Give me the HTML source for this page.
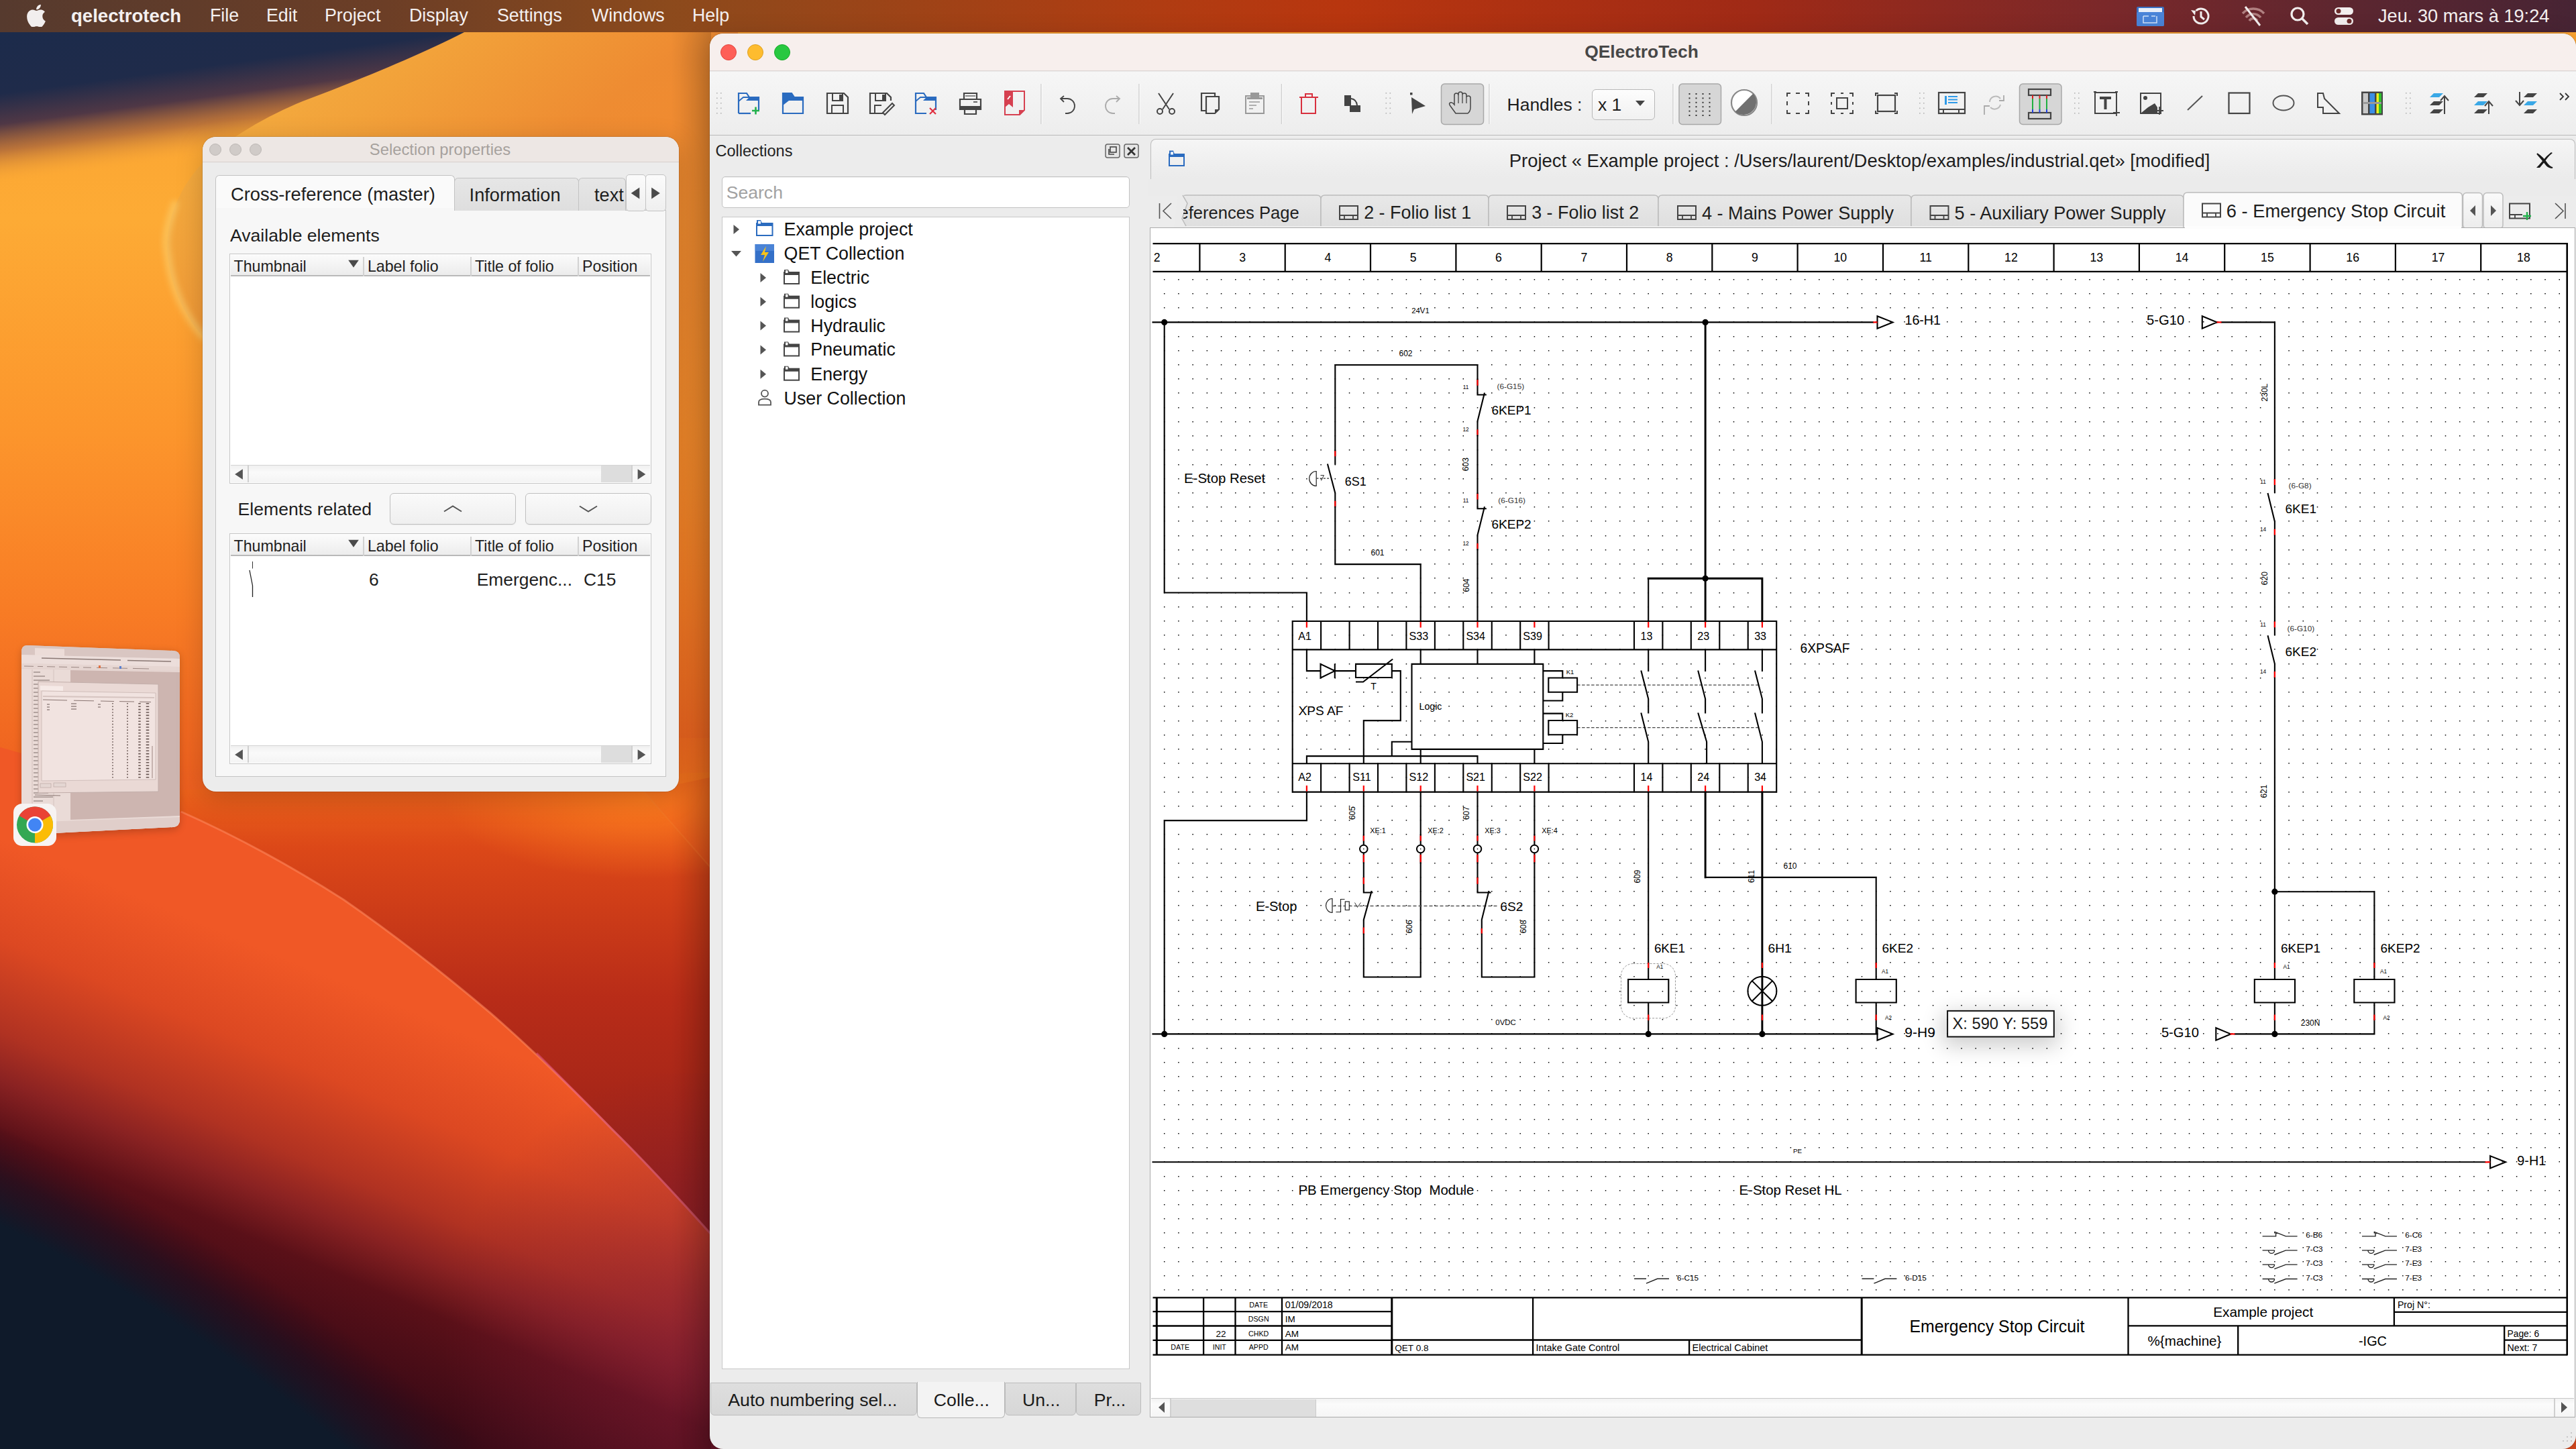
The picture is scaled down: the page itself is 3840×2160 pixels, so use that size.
<!DOCTYPE html>
<html><head><meta charset="utf-8"><title>QElectroTech</title>
<style>
*{box-sizing:border-box}
html,body{margin:0;padding:0}
body{width:3840px;height:2160px;position:relative;overflow:hidden;font-family:"Liberation Sans",sans-serif;background:#6a1a22;color:#1e1e1e}
.a{position:absolute}
.t{position:absolute;white-space:pre;line-height:1}
</style></head><body>

<svg class="a" style="left:0;top:0" width="3840" height="2160" viewBox="0 0 3840 2160">
<defs>
<linearGradient id="wbase" x1="0" y1="0" x2="0" y2="2160" gradientUnits="userSpaceOnUse">
<stop offset="0" stop-color="#f9a030"/>
<stop offset="0.15" stop-color="#fdab35"/>
<stop offset="0.3" stop-color="#fc952c"/>
<stop offset="0.42" stop-color="#f87c25"/>
<stop offset="0.52" stop-color="#f06520"/>
<stop offset="0.6" stop-color="#e4521e"/>
<stop offset="1" stop-color="#d84a20"/>
</linearGradient>
<filter id="bl40" x="-50%" y="-50%" width="200%" height="200%"><feGaussianBlur stdDeviation="45"/></filter>
<filter id="bl6" x="-20%" y="-20%" width="140%" height="140%"><feGaussianBlur stdDeviation="5"/></filter>
<linearGradient id="wave1" x1="300" y1="48" x2="1000" y2="900" gradientUnits="userSpaceOnUse">
<stop offset="0" stop-color="#f5b444"/>
<stop offset="0.22" stop-color="#f2a23a"/>
<stop offset="0.42" stop-color="#ee8c32"/>
<stop offset="0.7" stop-color="#ee7c2c" stop-opacity="0.6"/>
<stop offset="1" stop-color="#f0782a" stop-opacity="0"/>
</linearGradient>
<linearGradient id="red2" x1="0" y1="1150" x2="0" y2="1900" gradientUnits="userSpaceOnUse">
<stop offset="0" stop-color="#f06a1c"/>
<stop offset="0.15" stop-color="#dc4818"/>
<stop offset="0.45" stop-color="#b82c18"/>
<stop offset="1" stop-color="#8a1c18"/>
</linearGradient>
<linearGradient id="lowwave" x1="0" y1="1250" x2="-214" y2="1760" gradientUnits="userSpaceOnUse">
<stop offset="0" stop-color="#f05826"/>
<stop offset="0.25" stop-color="#dc4822"/>
<stop offset="0.48" stop-color="#b03222"/>
<stop offset="0.6" stop-color="#8a2222"/>
<stop offset="0.73" stop-color="#5a1018"/>
<stop offset="1" stop-color="#3a0a16"/>
</linearGradient>
<radialGradient id="purp" cx="1080" cy="2000" r="420" gradientUnits="userSpaceOnUse">
<stop offset="0" stop-color="#7a1a3a" stop-opacity="0.6"/>
<stop offset="1" stop-color="#7a1a3a" stop-opacity="0"/>
</radialGradient>
<radialGradient id="brt" cx="960" cy="1190" r="200" gradientUnits="userSpaceOnUse" gradientTransform="translate(960 1190) scale(1.5 0.6) translate(-960 -1190)">
<stop offset="0" stop-color="#fb7a1e" stop-opacity="0.95"/>
<stop offset="1" stop-color="#fb7a1e" stop-opacity="0"/>
</radialGradient>
<radialGradient id="navyb2" cx="-100" cy="2370" r="660" gradientUnits="userSpaceOnUse" gradientTransform="translate(-100 2370) rotate(30) scale(2.2 1) translate(100 -2370)">
<stop offset="0" stop-color="#0f1a2a"/>
<stop offset="0.8" stop-color="#0f1a2a"/>
<stop offset="0.9" stop-color="#1e1020" stop-opacity="0.7"/>
<stop offset="1" stop-color="#2a0a18" stop-opacity="0"/>
</radialGradient>
<linearGradient id="navyt" x1="0" y1="48" x2="40" y2="348" gradientUnits="userSpaceOnUse">
<stop offset="0" stop-color="#1c2b4b"/>
<stop offset="0.3" stop-color="#1f2b4a"/>
<stop offset="0.45" stop-color="#4a3446" stop-opacity="0.97"/>
<stop offset="0.58" stop-color="#a05e3c" stop-opacity="0.7"/>
<stop offset="0.74" stop-color="#f9a535" stop-opacity="0"/>
</linearGradient>
<linearGradient id="shadowR" x1="1058" y1="0" x2="1000" y2="0" gradientUnits="userSpaceOnUse">
<stop offset="0" stop-color="#000" stop-opacity="0.14"/>
<stop offset="1" stop-color="#000" stop-opacity="0"/>
</linearGradient>
</defs>
<rect x="0" y="0" width="3840" height="2160" fill="url(#wbase)"/>
<!-- right reddish region lower -->
<path d="M200 1180 L1100 1150 L1100 2160 L300 2160 Z" fill="url(#red2)"/>
<path d="M960 1180 L1100 1340 L1100 1150 Z" fill="#e04a1a"/>
<rect x="600" y="1100" width="500" height="250" fill="url(#brt)"/>
<path d="M960 1180 L1100 1340" stroke="#f08030" stroke-width="2" opacity="0.3"/>
<!-- top-left navy -->
<rect x="0" y="40" width="1100" height="320" fill="url(#navyt)"/>
<!-- yellow wave sharp edge -->
<path d="M692 48 C620 85 520 125 451 151 C400 172 340 205 300 245 C268 280 245 330 250 380 C255 430 275 470 305 505 C360 600 420 700 480 1000 L1100 1000 L1100 40 L720 40 Z" fill="url(#wave1)"/>
<path d="M262 300 C248 340 245 360 250 380 C255 430 275 470 305 505" stroke="#fbd070" stroke-width="9" fill="none" opacity="0.7" filter="url(#bl6)"/>
<!-- lower wave sharp edge (orange-red left side) -->
<path d="M-50 1100 C100 1140 200 1175 270 1210 C360 1250 440 1295 512 1341 C590 1395 660 1450 731 1510 C800 1570 860 1630 914 1685 C965 1735 1015 1790 1060 1840 L1100 1890 L1100 2160 L-50 2160 Z" fill="url(#lowwave)"/>
<path d="M270 1210 C360 1250 440 1295 512 1341 C590 1395 660 1450 731 1510 C800 1570 860 1630 914 1685 C965 1735 1015 1790 1060 1840" stroke="#ff8a60" stroke-width="3" fill="none" opacity="0.55"/>
<path d="M800 1570 C860 1630 914 1685 914 1685 C965 1735 1015 1790 1060 1840" stroke="#e85a90" stroke-width="3" fill="none" opacity="0.5"/>
<rect x="600" y="1600" width="500" height="560" fill="url(#purp)"/>
<!-- bottom left navy -->
<rect x="0" y="1500" width="1100" height="660" fill="url(#navyb2)"/>
<rect x="1000" y="48" width="60" height="2112" fill="url(#shadowR)"/>
</svg>

<div class="a" style="left:0;top:0;width:3840px;height:48px;background:linear-gradient(90deg,#563a2e 0%,#6c3e26 15%,#8c4a1c 26%,#b03c12 45%,#b8360f 52%,#a02a16 68%,#7a282a 82%,#5a2630 92%,#472434 100%)"></div>
<svg class="a" style="left:39px;top:6px" width="30" height="34" viewBox="0 0 170 200"><path fill="#f2eeee" d="M140 106c0-24 20-36 21-37-12-17-30-19-36-19-15-2-30 9-38 9-8 0-20-9-33-9-17 0-33 10-42 25-18 31-5 77 13 102 8 12 18 26 31 26 13-1 17-8 33-8 15 0 20 8 33 8 14 0 22-13 30-25 10-14 14-28 14-29-1 0-27-10-26-43zM115 35c7-8 12-20 10-31-10 0-22 7-29 15-6 7-12 19-10 30 11 1 22-6 29-14z"/></svg>
<div class="t" style="left:106px;top:10px;font-size:27.6px;font-weight:700;color:#f4f0f0">qelectrotech</div>
<div class="t" style="left:313px;top:10px;font-size:26.8px;color:#f4f0f0">File</div>
<div class="t" style="left:397px;top:10px;font-size:26.8px;color:#f4f0f0">Edit</div>
<div class="t" style="left:484px;top:10px;font-size:26.8px;color:#f4f0f0">Project</div>
<div class="t" style="left:610px;top:10px;font-size:26.8px;color:#f4f0f0">Display</div>
<div class="t" style="left:741px;top:10px;font-size:26.8px;color:#f4f0f0">Settings</div>
<div class="t" style="left:882px;top:10px;font-size:26.8px;color:#f4f0f0">Windows</div>
<div class="t" style="left:1032px;top:10px;font-size:26.8px;color:#f4f0f0">Help</div>
<!-- status icons -->
<svg class="a" style="left:3185px;top:8px" width="42" height="32" viewBox="0 0 42 32">
<rect x="0" y="2" width="41" height="29" rx="2" fill="#3a6fc0"/>
<rect x="3" y="4" width="35" height="8" fill="#e8eef8"/>
<rect x="0" y="10" width="41" height="21" rx="2" fill="#4a84d8"/>
<path d="M10 16h8M22 16h6M10 16v10h20v-10" stroke="#cfe0f8" stroke-width="1.5" fill="none"/>
</svg>
<svg class="a" style="left:3264px;top:9px" width="32" height="30" viewBox="0 0 32 30"><path d="M6 15a11 11 0 1 0 3.5-8" stroke="#f2eeee" stroke-width="3" fill="none"/><path d="M2 6l7 1 -1 7z" fill="#f2eeee"/><path d="M17 8v8l5 4" stroke="#f2eeee" stroke-width="3" fill="none"/></svg>
<svg class="a" style="left:3340px;top:8px" width="38" height="32" viewBox="0 0 38 32"><path d="M3 12a22 22 0 0 1 32 0M8 18a14 14 0 0 1 22 0M13 23a7 7 0 0 1 12 0" stroke="#b08080" stroke-width="3.5" fill="none"/><path d="M7 2l22 28" stroke="#f2eeee" stroke-width="3"/></svg>
<svg class="a" style="left:3413px;top:9px" width="30" height="30" viewBox="0 0 30 30"><circle cx="12" cy="12" r="9" stroke="#f2eeee" stroke-width="3.2" fill="none"/><path d="M19 19l8 8" stroke="#f2eeee" stroke-width="3.5"/></svg>
<svg class="a" style="left:3479px;top:10px" width="30" height="28" viewBox="0 0 30 28"><rect x="1" y="1" width="28" height="11" rx="5.5" fill="#f2eeee"/><circle cx="7" cy="6.5" r="3.5" fill="#6a2a2a"/><rect x="1" y="16" width="28" height="11" rx="5.5" fill="#f2eeee"/><circle cx="23" cy="21.5" r="3.5" fill="#6a2a2a"/></svg>
<div class="t" style="left:3545px;top:10px;font-size:27.2px;color:#f4f0f0">Jeu. 30 mars à 19:24</div>

<svg class="a" style="left:0;top:940px" width="300" height="340" viewBox="0 940 300 340">
<defs><filter id="thsh" x="-30%" y="-30%" width="160%" height="160%"><feGaussianBlur stdDeviation="6"/></filter><clipPath id="thclip"><path d="M40 962 Q32 962 32 972 L32 1236 Q32 1244 40 1244 L258 1233 Q268 1232 268 1222 L268 980 Q268 970 258 970 Z"/></clipPath></defs>
<path d="M40 966 Q32 966 32 976 L32 1238 Q32 1248 40 1248 L258 1237 Q268 1236 268 1226 L268 984 Q268 972 258 972 Z" fill="#000" opacity="0.2" filter="url(#thsh)"/>
<g clip-path="url(#thclip)">
<rect x="30" y="960" width="240" height="290" fill="#e2d0cc"/>
<path d="M30 960 L270 968 L270 982 L30 976 Z" fill="#d9c6c2"/>
<path d="M52 966 L96 967.5 L96 978 L52 977 Z" fill="#ecdcd8"/>
<path d="M30 976 L270 982 L270 994 L30 989 Z" fill="#ecdedb"/>
<path d="M62 981 L180 984 M190 984.5 L255 986" stroke="#8a7874" stroke-width="1.6"/>
<path d="M30 989 L270 994 L270 1000 L30 996 Z" fill="#e6d6d2"/>
<path d="M36 993 L50 993.3 M56 993.4 L64 993.6 M70 993.7 L82 994 M88 994.1 L100 994.4 M106 994.5 L118 994.8 M124 994.9 L136 995.2 M144 995.3 L160 995.7 M168 995.8 L190 996.3 M198 996.4 L222 997" stroke="#9a8682" stroke-width="1"/>
<rect x="147" y="992" width="3" height="4" fill="#e07040"/><rect x="178" y="993" width="3" height="4" fill="#5a80d0"/>
<path d="M32 997 L270 1001 L270 1240 L32 1248 Z" fill="#eadbd7"/>
<path d="M48 998 L48 1246 M80 998 L80 1245" stroke="#cfbcb8" stroke-width="0.8"/>
<path d="M105 999 L268 1002 L268 1216 L105 1222 Z" fill="#cdb5b0"/>
<path d="M50 1002 L60 1002 M50 1008 L67 1008 M50 1014 L74 1014 M50 1020 L81 1020 M50 1026 L66 1026 M50 1032 L73 1032 M50 1038 L80 1038 M50 1044 L65 1044 M50 1050 L72 1050 M50 1056 L79 1056 M50 1062 L64 1062 M50 1068 L71 1068 M50 1074 L78 1074 M50 1080 L63 1080 M50 1086 L70 1086 M50 1092 L77 1092 M50 1098 L62 1098 M50 1104 L69 1104 M50 1110 L76 1110 M50 1116 L61 1116 M50 1122 L68 1122 M50 1128 L75 1128 M50 1134 L60 1134 M50 1140 L67 1140 M50 1146 L74 1146 M50 1152 L81 1152 M50 1158 L66 1158 M50 1164 L73 1164 M50 1170 L80 1170 M50 1176 L65 1176 M50 1182 L72 1182 M50 1188 L79 1188 M50 1194 L64 1194 M50 1200 L71 1200 " stroke="#7a6a66" stroke-width="1"/>
<path d="M57 1016 L236 1020 L236 1180 L57 1182 Z" fill="#ead9d5" stroke="#c2aeaa" stroke-width="1"/>
<path d="M60 1022 L94 1023 L94 1030 L60 1029Z" fill="#f6eae7"/>
<path d="M62 1030 L232 1033 L232 1162 L62 1164 Z" fill="#f1e3e0" stroke="#c9b6b2" stroke-width="0.8"/>
<path d="M64 1038 L230 1040" stroke="#d6c4c0" stroke-width="2"/>
<path d="M64 1043 L100 1044 M110 1044.2 L140 1044.8 M150 1045 L170 1045.5 M178 1045.6 L200 1046 M208 1046.2 L225 1046.5" stroke="#8a7672" stroke-width="1"/>
<path d="M70 1050 L74 1050 M70 1054 L74 1054 M70 1058 L74 1058 M106 1049 L114 1049 M106 1053 L114 1053 M106 1057 L114 1057 M146 1050 L150 1050 M146 1054 L150 1054" stroke="#6a5854" stroke-width="1.2"/>
<path d="M168 1048 L168 1160" stroke="#6a5854" stroke-width="1.6" stroke-dasharray="1.6 2.8"/>
<path d="M190 1048 L190 1160" stroke="#6a5854" stroke-width="1.8" stroke-dasharray="1.6 2.8"/>
<path d="M208 1048 L208 1160" stroke="#6a5854" stroke-width="3.5" stroke-dasharray="1.6 2.8"/>
<path d="M220 1048 L220 1160" stroke="#6a5854" stroke-width="4.5" stroke-dasharray="1.6 2.8"/>
<path d="M227 1112 L227 1160" stroke="#b8a4a0" stroke-width="1.5"/>
<rect x="60" y="1168" width="16" height="6" fill="#e4d6d2" stroke="#b4a29e" stroke-width="0.6"/><rect x="80" y="1167" width="18" height="6" fill="#e4d6d2" stroke="#b4a29e" stroke-width="0.6"/>
<path d="M52 1185 L90 1186" stroke="#8a7672" stroke-width="1"/>
<path d="M32 1226 L268 1218 L268 1240 L32 1250Z" fill="#e0ceca"/>
</g>
<rect x="20" y="1198" width="64" height="63" rx="13" fill="#f7f3f2"/>
<g transform="translate(52 1229.5)">
<circle r="27" fill="#34a853"/>
<path d="M0 0 L-23.4 -13.5 A27 27 0 0 1 23.4 -13.5 Z" fill="#ea4335"/>
<path d="M0 0 L23.4 -13.5 A27 27 0 0 1 0 27 Z" fill="#fbbc04"/>
<circle r="12.5" fill="#fff"/><circle r="10" fill="#4285f4"/>
</g>
</svg>
<div class="a" style="left:302px;top:204px;width:710px;height:976px;border-radius:20px;box-shadow:0 10px 40px rgba(0,0,0,0.18),0 0 0 1px rgba(0,0,0,0.10);background:#ececec"></div>
<div class="a" style="left:302px;top:204px;width:710px;height:38px;border-radius:20px 20px 0 0;background:#ede7e4;border-bottom:1.5px solid #d6d0cc"></div>
<div class="a" style="left:312px;top:214px;width:18px;height:18px;border-radius:9px;background:#d0cbc8;border:1px solid #bdb8b5"></div>
<div class="a" style="left:342px;top:214px;width:18px;height:18px;border-radius:9px;background:#d0cbc8;border:1px solid #bdb8b5"></div>
<div class="a" style="left:372px;top:214px;width:18px;height:18px;border-radius:9px;background:#d0cbc8;border:1px solid #bdb8b5"></div>
<div class="t" style="left:-344.0px;width:2000px;text-align:center;top:211.4px;font-size:23.8px;color:#a6a19d;font-weight:400;">Selection properties</div>
<div class="a" style="left:320.5px;top:312.5px;width:672.0px;height:845.5px;background:#f7f7f7;border:1.5px solid #c3c3c3"></div>
<div class="a" style="left:677.0px;top:265.0px;width:185.5px;height:49.0px;background:linear-gradient(#e6e6e6,#dedede);border:1.5px solid #c3c3c3;border-bottom:none;border-radius:6px 6px 0 0"></div>
<div class="a" style="left:862.0px;top:265.0px;width:71.0px;height:49.0px;background:linear-gradient(#e6e6e6,#dedede);border:1.5px solid #c3c3c3;border-bottom:none;border-radius:6px 6px 0 0"></div>
<div class="t" style="left:699.6px;top:277.3px;font-size:27.2px;color:#1e1e1e;font-weight:400;">Information</div>
<div class="a" style="left:864px;top:266px;width:68px;height:46px;overflow:hidden"><div class="t" style="left:22.0px;top:11.3px;font-size:27.2px;color:#1e1e1e;font-weight:400;">text</div></div>
<div class="a" style="left:320.5px;top:260.5px;width:357.0px;height:53.5px;background:#fafafa;border:1.5px solid #c3c3c3;border-bottom:none;border-radius:6px 6px 0 0"></div>
<div class="a" style="left:322.0px;top:310.0px;width:354.0px;height:6.0px;background:#f7f7f7"></div>
<div class="t" style="left:344.0px;top:275.7px;font-size:27.3px;color:#1e1e1e;font-weight:400;">Cross-reference (master)</div>
<div class="a" style="left:932.5px;top:260.0px;width:30.5px;height:54.5px;background:linear-gradient(#fbfbfb,#efefef);border:1.5px solid #c3c3c3;border-radius:5px"></div>
<div class="a" style="left:962.0px;top:260.0px;width:30.5px;height:54.5px;background:linear-gradient(#fbfbfb,#efefef);border:1.5px solid #c3c3c3;border-radius:5px"></div>
<svg class="a" style="left:932px;top:260px" width="62" height="56"><polygon points="21.3,19.6 21.3,36.4 8.7,28" fill="#4a4a4a"/><polygon points="39.2,19.6 39.2,36.4 51.8,28" fill="#4a4a4a"/></svg>
<div class="t" style="left:343.0px;top:338.0px;font-size:26.6px;color:#1e1e1e;font-weight:400;">Available elements</div>
<div class="a" style="left:342.0px;top:378.0px;width:628.5px;height:342.5px;background:#fff;border:1.5px solid #c6c6c6"></div>
<div class="a" style="left:343.5px;top:379.5px;width:625.5px;height:32.0px;background:linear-gradient(#fbfbfb,#ececec);border-bottom:2px solid #b9b9b9"></div>
<div class="a" style="left:541.3px;top:383.0px;width:2.0px;height:28.5px;background:#d2d2d2"></div>
<div class="a" style="left:701.2px;top:383.0px;width:2.0px;height:28.5px;background:#d2d2d2"></div>
<div class="a" style="left:861.2px;top:383.0px;width:2.0px;height:28.5px;background:#d2d2d2"></div>
<div class="t" style="left:348.5px;top:386.1px;font-size:23.2px;color:#1e1e1e;font-weight:400;">Thumbnail</div>
<div class="t" style="left:547.9px;top:386.1px;font-size:23.2px;color:#1e1e1e;font-weight:400;">Label folio</div>
<div class="t" style="left:708.0px;top:386.1px;font-size:23.2px;color:#1e1e1e;font-weight:400;">Title of folio</div>
<div class="t" style="left:868.0px;top:386.1px;font-size:23.2px;color:#1e1e1e;font-weight:400;">Position</div>
<svg class="a" style="left:515px;top:386px" width="24" height="16"><polygon points="4.2,1.7999999999999998 19.8,1.7999999999999998 12,12.850000000000001" fill="#4a4a4a"/></svg>
<div class="a" style="left:343.5px;top:692.5px;width:625.5px;height:26.5px;background:linear-gradient(#f0f0f0,#fafafa 40%,#f4f4f4);border-top:1.5px solid #d4d4d4"></div>
<div class="a" style="left:369.0px;top:692.5px;width:2.0px;height:26.5px;background:#d0d0d0"></div>
<div class="a" style="left:896.0px;top:694.0px;width:45.5px;height:25.0px;background:#dddddd"></div>
<div class="a" style="left:941.0px;top:692.5px;width:2.0px;height:26.5px;background:#d0d0d0"></div>
<svg class="a" style="left:342px;top:692.5px" width="628.5" height="28"><polygon points="19.85,6.2 19.85,21.8 8.149999999999999,14" fill="#555"/><polygon points="608.65,6.2 608.65,21.8 620.35,14" fill="#555"/></svg>
<div class="t" style="left:354.6px;top:746.0px;font-size:26.6px;color:#1e1e1e;font-weight:400;">Elements related</div>
<div class="a" style="left:580.7px;top:735.0px;width:188.3px;height:46.5px;background:linear-gradient(#fafafa,#efefef);border:1.5px solid #c0c0c0;border-radius:6px;box-shadow:0 1px 1px rgba(0,0,0,0.06)"></div>
<div class="a" style="left:782.8px;top:735.0px;width:188.5px;height:46.5px;background:linear-gradient(#fafafa,#efefef);border:1.5px solid #c0c0c0;border-radius:6px;box-shadow:0 1px 1px rgba(0,0,0,0.06)"></div>
<svg class="a" style="left:580px;top:735px" width="392" height="47"><path d="M82 27.5 L95 19.5 L108 27.5" stroke="#555" stroke-width="2" fill="none"/><path d="M284 19.5 L297 27.5 L310 19.5" stroke="#555" stroke-width="2" fill="none"/></svg>
<div class="a" style="left:342.0px;top:795.0px;width:628.5px;height:343.5px;background:#fff;border:1.5px solid #c6c6c6"></div>
<div class="a" style="left:343.5px;top:796.5px;width:625.5px;height:32.0px;background:linear-gradient(#fbfbfb,#ececec);border-bottom:2px solid #b9b9b9"></div>
<div class="a" style="left:541.3px;top:800.0px;width:2.0px;height:28.5px;background:#d2d2d2"></div>
<div class="a" style="left:701.2px;top:800.0px;width:2.0px;height:28.5px;background:#d2d2d2"></div>
<div class="a" style="left:861.2px;top:800.0px;width:2.0px;height:28.5px;background:#d2d2d2"></div>
<div class="t" style="left:348.5px;top:803.1px;font-size:23.2px;color:#1e1e1e;font-weight:400;">Thumbnail</div>
<div class="t" style="left:547.9px;top:803.1px;font-size:23.2px;color:#1e1e1e;font-weight:400;">Label folio</div>
<div class="t" style="left:708.0px;top:803.1px;font-size:23.2px;color:#1e1e1e;font-weight:400;">Title of folio</div>
<div class="t" style="left:868.0px;top:803.1px;font-size:23.2px;color:#1e1e1e;font-weight:400;">Position</div>
<svg class="a" style="left:515px;top:803px" width="24" height="16"><polygon points="4.2,1.7999999999999998 19.8,1.7999999999999998 12,12.850000000000001" fill="#4a4a4a"/></svg>
<div class="a" style="left:343.5px;top:1110.5px;width:625.5px;height:26.5px;background:linear-gradient(#f0f0f0,#fafafa 40%,#f4f4f4);border-top:1.5px solid #d4d4d4"></div>
<div class="a" style="left:369.0px;top:1110.5px;width:2.0px;height:26.5px;background:#d0d0d0"></div>
<div class="a" style="left:896.0px;top:1112.0px;width:45.5px;height:25.0px;background:#dddddd"></div>
<div class="a" style="left:941.0px;top:1110.5px;width:2.0px;height:26.5px;background:#d0d0d0"></div>
<svg class="a" style="left:342px;top:1110.5px" width="628.5" height="28"><polygon points="19.85,6.2 19.85,21.8 8.149999999999999,14" fill="#555"/><polygon points="608.65,6.2 608.65,21.8 620.35,14" fill="#555"/></svg>
<div class="t" style="left:550.0px;top:851.1px;font-size:26.4px;color:#1e1e1e;font-weight:400;">6</div>
<div class="t" style="left:710.7px;top:851.1px;font-size:26.4px;color:#1e1e1e;font-weight:400;">Emergenc...</div>
<div class="t" style="left:870.0px;top:851.1px;font-size:26.4px;color:#1e1e1e;font-weight:400;">C15</div>
<svg class="a" style="left:365px;top:835px" width="24" height="58"><path d="M11.5 2 V12.5" stroke="#333" stroke-width="1"/><path d="M7 15 L11.5 38 V55" stroke="#222" stroke-width="1.3" fill="none"/></svg>
<div class="a" style="left:1058px;top:50px;width:2782px;height:2110px;border-radius:20px;background:#ececec;box-shadow:-4px 10px 40px rgba(0,0,0,0.2),0 0 0 1px rgba(0,0,0,0.12)"></div>
<div class="a" style="left:1058px;top:50px;width:2782px;height:56px;border-radius:20px 20px 0 0;background:#f7efed;border-bottom:1.5px solid #dcd3d1"></div>
<div class="a" style="left:1073.9px;top:66.3px;width:24px;height:24px;border-radius:12px;background:#fe5f57;border:1px solid #e2463f"></div>
<div class="a" style="left:1114px;top:66.3px;width:24px;height:24px;border-radius:12px;background:#febc2e;border:1px solid #dea123"></div>
<div class="a" style="left:1153.7px;top:66.3px;width:24px;height:24px;border-radius:12px;background:#28c840;border:1px solid #1aab29"></div>
<div class="t" style="left:1447.0px;width:2000px;text-align:center;top:63.6px;font-size:26.4px;color:#474747;font-weight:700;">QElectroTech</div>
<div class="a" style="left:1058px;top:106.5px;width:2782px;height:95px;background:linear-gradient(#f6f6f6,#ededed);border-bottom:1.5px solid #b9b9b9"></div>
<svg class="a" style="left:1058px;top:106px" width="2782" height="96" viewBox="1058 106 2782 96">
<g fill="none" stroke-linecap="butt">
<rect x="1068" y="138.0" width="1.6" height="1.6" fill="#b4b4b4"/><rect x="1074" y="138.0" width="1.6" height="1.6" fill="#b4b4b4"/><rect x="1068" y="145.5" width="1.6" height="1.6" fill="#b4b4b4"/><rect x="1074" y="145.5" width="1.6" height="1.6" fill="#b4b4b4"/><rect x="1068" y="153.0" width="1.6" height="1.6" fill="#b4b4b4"/><rect x="1074" y="153.0" width="1.6" height="1.6" fill="#b4b4b4"/><rect x="1068" y="160.5" width="1.6" height="1.6" fill="#b4b4b4"/><rect x="1074" y="160.5" width="1.6" height="1.6" fill="#b4b4b4"/><rect x="1068" y="168.0" width="1.6" height="1.6" fill="#b4b4b4"/><rect x="1074" y="168.0" width="1.6" height="1.6" fill="#b4b4b4"/>
<path d="M1101 169 V139 H1113 L1117 145 H1131 V164" stroke="#2a6bbf" stroke-width="2.2"/><path d="M1101 151 L1108 145 H1117" stroke="#2a6bbf" stroke-width="1.8"/><path d="M1101 169 H1119" stroke="#2a6bbf" stroke-width="2.2"/><path d="M1117 145 H1131 V150 H1112Z" fill="#2a6bbf"/><path d="M1121 165 H1132 M1126.5 159.5 V170.5" stroke="#22b14c" stroke-width="2.6"/>
<path d="M1167 169 V139 H1180 L1184 145 H1197 V169 Z" stroke="#2a6bbf" stroke-width="2.2"/><path d="M1167 139 H1180 L1184 145 H1197 V150 H1176 L1167 157 Z" fill="#2a6bbf"/>
<path d="M1233 139 H1258 L1264 145 V169 H1233 Z" stroke="#444" stroke-width="2.2"/><path d="M1241 139 V150 H1256 V139" stroke="#444" stroke-width="2"/><rect x="1251" y="141" width="4" height="8" fill="#444"/><path d="M1240 169 V157 H1257 V169" stroke="#444" stroke-width="2"/>
<path d="M1316 169 H1297 V139 H1322 L1328 145 V150" stroke="#444" stroke-width="2.2"/><path d="M1305 139 V150 H1320 V139" stroke="#444" stroke-width="2"/><rect x="1315" y="141" width="4" height="8" fill="#444"/><path d="M1304 169 V157 H1314" stroke="#444" stroke-width="2"/><path d="M1316 168 L1330 154 L1333 157 L1319 171 Z" stroke="#444" stroke-width="2"/>
<path d="M1381 169 H1365 V139 H1377 L1381 145 H1395 V164" stroke="#2a6bbf" stroke-width="2.2"/><path d="M1365 151 L1372 145 H1381" stroke="#2a6bbf" stroke-width="1.8"/><path d="M1381 145 H1395 V150 H1376Z" fill="#2a6bbf"/><path d="M1386 161 L1395 170 M1395 161 L1386 170" stroke="#e03040" stroke-width="2.2"/>
<path d="M1437 148 V139 H1456 V148" stroke="#444" stroke-width="2.2"/><path d="M1431 163 V148 H1462 V163 Z" stroke="#444" stroke-width="2.2"/><rect x="1431" y="158" width="31" height="6" fill="#444"/><path d="M1438 163 V170 H1455 V163" stroke="#444" stroke-width="2.2"/><path d="M1451 152 H1457" stroke="#444" stroke-width="1.6"/><path d="M1439 143 H1454" stroke="#444" stroke-width="1.2"/>
<path d="M1498 136 H1527 V164 L1520 171 H1498 Z" stroke="#d64050" stroke-width="2"/><path d="M1498 136 H1510 V160 L1504 155 L1498 160 Z" fill="#d64050"/><path d="M1519 172 L1527 164 H1519 Z" fill="#d64050"/><path d="M1502 148 L1506 143" stroke="#fff" stroke-width="2"/>
<rect x="1551.25" y="125" width="1.5" height="60" fill="#cfcfcf"/><rect x="1552.75" y="125" width="1" height="60" fill="#fbfbfb"/>
<path d="M1586 143 L1581 147 L1586 152" stroke="#444" stroke-width="1.8"/><path d="M1581 147 H1591 A11 11 0 0 1 1591 169 H1588" stroke="#444" stroke-width="1.8"/>
<path d="M1664 143 L1669 147 L1664 152" stroke="#aaa" stroke-width="1.8"/><path d="M1669 147 H1659 A11 11 0 0 0 1659 169 H1662" stroke="#aaa" stroke-width="1.8"/>
<rect x="1697.25" y="125" width="1.5" height="60" fill="#cfcfcf"/><rect x="1698.75" y="125" width="1" height="60" fill="#fbfbfb"/>
<path d="M1727 139 L1743 163 M1749 139 L1733 163" stroke="#444" stroke-width="2"/><circle cx="1729" cy="166" r="4" stroke="#444" stroke-width="2"/><circle cx="1747" cy="166" r="4" stroke="#444" stroke-width="2"/>
<path d="M1798 165 H1791 V139 H1811 V144" stroke="#444" stroke-width="2.2"/><path d="M1798 144 H1817 V163 L1811 169 H1798 Z" stroke="#444" stroke-width="2.2"/><path d="M1811 169 L1817 163 H1811Z" fill="#444"/>
<path d="M1857 143 H1884 V169 H1857 Z" stroke="#999" stroke-width="2"/><rect x="1864" y="138" width="13" height="7" fill="#999"/><rect x="1859" y="145" width="23" height="3" fill="#999"/><path d="M1862 152 H1878 M1862 157 H1873 M1862 162 H1868" stroke="#999" stroke-width="1.6"/>
<rect x="1909.75" y="125" width="1.5" height="60" fill="#cfcfcf"/><rect x="1911.25" y="125" width="1" height="60" fill="#fbfbfb"/>
<path d="M1937 145 H1965 M1946 145 V140 H1956 V145 M1940 145 V169 H1961 V145" stroke="#d8303e" stroke-width="2"/>
<rect x="2004" y="142" width="10" height="16" fill="#444"/><rect x="2012" y="157" width="16" height="10" fill="#444"/><path d="M2014 147 Q2022 148 2023 157" stroke="#444" stroke-width="2"/>
<rect x="2065.5" y="138.0" width="1.6" height="1.6" fill="#b4b4b4"/><rect x="2071.5" y="138.0" width="1.6" height="1.6" fill="#b4b4b4"/><rect x="2065.5" y="145.5" width="1.6" height="1.6" fill="#b4b4b4"/><rect x="2071.5" y="145.5" width="1.6" height="1.6" fill="#b4b4b4"/><rect x="2065.5" y="153.0" width="1.6" height="1.6" fill="#b4b4b4"/><rect x="2071.5" y="153.0" width="1.6" height="1.6" fill="#b4b4b4"/><rect x="2065.5" y="160.5" width="1.6" height="1.6" fill="#b4b4b4"/><rect x="2071.5" y="160.5" width="1.6" height="1.6" fill="#b4b4b4"/><rect x="2065.5" y="168.0" width="1.6" height="1.6" fill="#b4b4b4"/><rect x="2071.5" y="168.0" width="1.6" height="1.6" fill="#b4b4b4"/>
<rect x="2102" y="138" width="3.5" height="3.5" fill="#444"/><path d="M2104 145 L2125 158 L2108 163 L2105 170 Z" fill="#444"/>
<rect x="2148.5" y="125" width="63" height="60.5" rx="5" fill="#d6d6d6" stroke="#a8a8a8" stroke-width="1.5"/>
<path d="M2170 169 L2162 158 Q2159 154 2162 153 Q2165 152 2168 156 V142 Q2168 139 2171 139 Q2174 139 2174 142 V140 Q2174 137 2177 137 Q2180 137 2180 140 V141 Q2180 139 2183 139 Q2186 139 2186 142 V145 Q2186 143 2189 143 Q2192 143 2192 146 V160 Q2192 166 2188 169 Z" stroke="#444" stroke-width="1.5"/><path d="M2174 142 V154 M2180 141 V154 M2186 145 V154" stroke="#444" stroke-width="1.3"/>
<rect x="2219.25" y="125" width="1.5" height="60" fill="#cfcfcf"/><rect x="2220.75" y="125" width="1" height="60" fill="#fbfbfb"/>
<rect x="2493.25" y="125" width="1.5" height="60" fill="#cfcfcf"/><rect x="2494.75" y="125" width="1" height="60" fill="#fbfbfb"/>
<rect x="2503" y="125" width="62.5" height="60.5" rx="5" fill="#d6d6d6" stroke="#a8a8a8" stroke-width="1.5"/>
<rect x="2517.5" y="139.0" width="2" height="2" fill="#333"/><rect x="2517.5" y="145.4" width="2" height="2" fill="#333"/><rect x="2517.5" y="151.8" width="2" height="2" fill="#333"/><rect x="2517.5" y="158.2" width="2" height="2" fill="#333"/><rect x="2517.5" y="164.6" width="2" height="2" fill="#333"/><rect x="2517.5" y="171.0" width="2" height="2" fill="#333"/><rect x="2527.5" y="139.0" width="2" height="2" fill="#333"/><rect x="2527.5" y="145.4" width="2" height="2" fill="#333"/><rect x="2527.5" y="151.8" width="2" height="2" fill="#333"/><rect x="2527.5" y="158.2" width="2" height="2" fill="#333"/><rect x="2527.5" y="164.6" width="2" height="2" fill="#333"/><rect x="2527.5" y="171.0" width="2" height="2" fill="#333"/><rect x="2537.5" y="139.0" width="2" height="2" fill="#333"/><rect x="2537.5" y="145.4" width="2" height="2" fill="#333"/><rect x="2537.5" y="151.8" width="2" height="2" fill="#333"/><rect x="2537.5" y="158.2" width="2" height="2" fill="#333"/><rect x="2537.5" y="164.6" width="2" height="2" fill="#333"/><rect x="2537.5" y="171.0" width="2" height="2" fill="#333"/><rect x="2547.5" y="139.0" width="2" height="2" fill="#333"/><rect x="2547.5" y="145.4" width="2" height="2" fill="#333"/><rect x="2547.5" y="151.8" width="2" height="2" fill="#333"/><rect x="2547.5" y="158.2" width="2" height="2" fill="#333"/><rect x="2547.5" y="164.6" width="2" height="2" fill="#333"/><rect x="2547.5" y="171.0" width="2" height="2" fill="#333"/>
<circle cx="2600" cy="153" r="19" fill="#fff" stroke="#888" stroke-width="2.2"/><path d="M2613.4 139.6 A19 19 0 0 1 2586.6 166.4 Z" fill="#707070"/>
<rect x="2640.25" y="125" width="1.5" height="60" fill="#cfcfcf"/><rect x="2641.75" y="125" width="1" height="60" fill="#fbfbfb"/>
<path d="M2664 144 V139 H2669 M2691 139 H2696 V144 M2696 164 V169 H2691 M2669 169 H2664 V164" stroke="#444" stroke-width="2"/><path d="M2677 139 H2683 M2677 169 H2683 M2664 151 V157 M2696 151 V157" stroke="#444" stroke-width="2"/>
<path d="M2730 144 V139 H2735 M2757 139 H2762 V144 M2762 164 V169 H2757 M2735 169 H2730 V164" stroke="#444" stroke-width="2"/><rect x="2738" y="146" width="16" height="16" stroke="#444" stroke-width="2"/><path d="M2744 139 H2748 M2744 169 H2748 M2730 152 V156 M2762 152 V156" stroke="#444" stroke-width="2"/>
<path d="M2796 143 V139 H2800 M2824 139 H2828 V143 M2828 165 V169 H2824 M2800 169 H2796 V165" stroke="#444" stroke-width="2"/><rect x="2799" y="142" width="26" height="24" stroke="#444" stroke-width="2.2"/>
<rect x="2861" y="138.0" width="1.6" height="1.6" fill="#b4b4b4"/><rect x="2867" y="138.0" width="1.6" height="1.6" fill="#b4b4b4"/><rect x="2861" y="145.5" width="1.6" height="1.6" fill="#b4b4b4"/><rect x="2867" y="145.5" width="1.6" height="1.6" fill="#b4b4b4"/><rect x="2861" y="153.0" width="1.6" height="1.6" fill="#b4b4b4"/><rect x="2867" y="153.0" width="1.6" height="1.6" fill="#b4b4b4"/><rect x="2861" y="160.5" width="1.6" height="1.6" fill="#b4b4b4"/><rect x="2867" y="160.5" width="1.6" height="1.6" fill="#b4b4b4"/><rect x="2861" y="168.0" width="1.6" height="1.6" fill="#b4b4b4"/><rect x="2867" y="168.0" width="1.6" height="1.6" fill="#b4b4b4"/>
<rect x="2890" y="138" width="39" height="31" stroke="#444" stroke-width="2.2"/><path d="M2890 163 H2929 M2897 163 V169 M2920 163 V169" stroke="#444" stroke-width="2"/><rect x="2899" y="143" width="3" height="13" fill="#2e9ae8"/><path d="M2904 144 H2918 M2904 148.5 H2918 M2904 153 H2918" stroke="#2e9ae8" stroke-width="2"/>
<path d="M2958 171 V158 H2966 M2987 142 V150 H2980" stroke="#aaa" stroke-width="1.8"/><path d="M2966 152 A9 9 0 0 1 2982 147 M2982 156 A9 9 0 0 1 2967 160" stroke="#bbb" stroke-width="2"/>
<rect x="3010.5" y="125" width="62.5" height="60.5" rx="5" fill="#d6d6d6" stroke="#a8a8a8" stroke-width="1.5"/>
<rect x="3024" y="133" width="33" height="9" stroke="#444" stroke-width="2.2"/><rect x="3024" y="168" width="33" height="9" stroke="#444" stroke-width="2.2"/>
<path d="M3030 142 V147" stroke="#e02020" stroke-width="2"/><path d="M3030 147 V163" stroke="#20b040" stroke-width="2"/><path d="M3030 163 V168" stroke="#2040e0" stroke-width="2"/>
<path d="M3040.5 142 V147" stroke="#e02020" stroke-width="2"/><path d="M3040.5 147 V163" stroke="#20b040" stroke-width="2"/><path d="M3040.5 163 V168" stroke="#2040e0" stroke-width="2"/>
<path d="M3051 142 V147" stroke="#e02020" stroke-width="2"/><path d="M3051 147 V163" stroke="#20b040" stroke-width="2"/><path d="M3051 163 V168" stroke="#2040e0" stroke-width="2"/>
<rect x="3092" y="138.0" width="1.6" height="1.6" fill="#b4b4b4"/><rect x="3098" y="138.0" width="1.6" height="1.6" fill="#b4b4b4"/><rect x="3092" y="145.5" width="1.6" height="1.6" fill="#b4b4b4"/><rect x="3098" y="145.5" width="1.6" height="1.6" fill="#b4b4b4"/><rect x="3092" y="153.0" width="1.6" height="1.6" fill="#b4b4b4"/><rect x="3098" y="153.0" width="1.6" height="1.6" fill="#b4b4b4"/><rect x="3092" y="160.5" width="1.6" height="1.6" fill="#b4b4b4"/><rect x="3098" y="160.5" width="1.6" height="1.6" fill="#b4b4b4"/><rect x="3092" y="168.0" width="1.6" height="1.6" fill="#b4b4b4"/><rect x="3098" y="168.0" width="1.6" height="1.6" fill="#b4b4b4"/>
<rect x="3123" y="138" width="32" height="31" stroke="#444" stroke-width="2"/><path d="M3130 146 H3147 M3138.5 146 V163" stroke="#444" stroke-width="4"/><path d="M3150 168 H3160 M3155 163 V173" stroke="#444" stroke-width="1.8"/>
<path d="M3121 137 H3125 M3153 137 H3157" stroke="#444" stroke-width="2"/>
<rect x="3191" y="139" width="30" height="30" stroke="#444" stroke-width="2"/><circle cx="3198" cy="146" r="3" fill="#444"/><path d="M3191 169 L3202 160 Q3207 157 3212 154 L3216 160 V169 Z" fill="#444"/><path d="M3213 165 H3225 M3219 159 V171" stroke="#444" stroke-width="1.8"/>
<path d="M3261 164 L3283 143" stroke="#555" stroke-width="2"/>
<rect x="3322.5" y="138.5" width="31" height="30.5" stroke="#444" stroke-width="2.2"/>
<ellipse cx="3404" cy="153.5" rx="15.5" ry="11" stroke="#555" stroke-width="2"/>
<path d="M3455 139 H3463 L3465 147 L3487 169 H3463 V160 H3455 Z" stroke="#444" stroke-width="2"/>
<rect x="3520" y="136.5" width="32" height="35" fill="#444"/><rect x="3522.5" y="139" width="7.5" height="30" fill="#c8c8c8"/><rect x="3532.5" y="139" width="7.5" height="30" fill="#3a8ee6"/><rect x="3542.5" y="139" width="7.5" height="30" fill="#f0f020"/><rect x="3546" y="139" width="4" height="30" fill="#30c030"/><rect x="3522" y="152" width="28" height="3" fill="#999"/>
<rect x="3586" y="138.0" width="1.6" height="1.6" fill="#b4b4b4"/><rect x="3592" y="138.0" width="1.6" height="1.6" fill="#b4b4b4"/><rect x="3586" y="145.5" width="1.6" height="1.6" fill="#b4b4b4"/><rect x="3592" y="145.5" width="1.6" height="1.6" fill="#b4b4b4"/><rect x="3586" y="153.0" width="1.6" height="1.6" fill="#b4b4b4"/><rect x="3592" y="153.0" width="1.6" height="1.6" fill="#b4b4b4"/><rect x="3586" y="160.5" width="1.6" height="1.6" fill="#b4b4b4"/><rect x="3592" y="160.5" width="1.6" height="1.6" fill="#b4b4b4"/><rect x="3586" y="168.0" width="1.6" height="1.6" fill="#b4b4b4"/><rect x="3592" y="168.0" width="1.6" height="1.6" fill="#b4b4b4"/>
<path d="M3622 145 L3628 139 H3642 L3636 145 Z" fill="#3aa8e6"/><path d="M3622 157 L3628 151 H3642 L3636 157 Z" fill="#444"/><path d="M3622 169 L3628 163 H3642 L3636 169 Z" fill="#444"/><path d="M3644 170 V144 M3638 150 L3644 143 L3650 150" stroke="#444" stroke-width="2"/>
<path d="M3688 145 L3694 139 H3708 L3702 145 Z" fill="#444"/><path d="M3688 157 L3694 151 H3708 L3702 157 Z" fill="#3aa8e6"/><path d="M3688 169 L3694 163 H3708 L3702 169 Z" fill="#444"/><path d="M3710 170 V152 M3704 158 L3710 151 L3716 158" stroke="#444" stroke-width="2"/>
<path d="M3762 145 L3768 139 H3782 L3776 145 Z" fill="#444"/><path d="M3762 157 L3768 151 H3782 L3776 157 Z" fill="#3aa8e6"/><path d="M3762 169 L3768 163 H3782 L3776 169 Z" fill="#444"/><path d="M3756 137 V156 M3750 150 L3756 157 L3762 150" stroke="#444" stroke-width="2"/>
<path d="M3816 139 L3821 144 L3816 149 M3824 139 L3829 144 L3824 149" stroke="#333" stroke-width="1.8"/>
</g></svg>
<div class="t" style="left:2246.5px;top:143.1px;font-size:26.5px;color:#1e1e1e;font-weight:400;">Handles :</div>
<div class="a" style="left:2372.5px;top:132.5px;width:94.5px;height:46.5px;background:linear-gradient(#fdfdfd,#f1f1f1);border:1.5px solid #b8b8b8;border-radius:6px"></div>
<div class="t" style="left:2382.0px;top:143.1px;font-size:26.5px;color:#1e1e1e;font-weight:400;">x 1</div>
<svg class="a" style="left:2436px;top:148px" width="20" height="14"><polygon points="2,2 16,2 9,10" fill="#444"/></svg>
<div class="t" style="left:1066.5px;top:213.7px;font-size:23.5px;color:#222;font-weight:400;">Collections</div>
<svg class="a" style="left:1646px;top:213px" width="54" height="24" viewBox="1646 213 54 24"><rect x="1648" y="215" width="21" height="20" rx="3" fill="#e6e6e6" stroke="#666" stroke-width="1.5"/><rect x="1655" y="219" width="9" height="8" fill="none" stroke="#444" stroke-width="1.6"/><path d="M1653 222 V230 H1661" stroke="#444" stroke-width="1.6" fill="none"/><rect x="1676" y="215" width="21" height="20" rx="3" fill="#e6e6e6" stroke="#666" stroke-width="1.5"/><path d="M1681 220 L1692 231 M1692 220 L1681 231" stroke="#333" stroke-width="2.8"/></svg>
<div class="a" style="left:1076.0px;top:263.0px;width:607.5px;height:46.5px;background:#fff;border:1.5px solid #c2c2c2;border-radius:5px;box-shadow:inset 0 1px 1px rgba(0,0,0,0.05)"></div>
<div class="t" style="left:1082.7px;top:273.8px;font-size:26.6px;color:#a2a2a2;font-weight:400;">Search</div>
<div class="a" style="left:1076.0px;top:323.0px;width:607.5px;height:1717.5px;background:#fff;border:1.5px solid #c8c8c8"></div>
<svg class="a" style="left:1076px;top:323px" width="608" height="300" viewBox="1076 323 608 300">
<polygon points="1093.5,335 1093.5,349 1102.0,342" fill="#555"/>
<rect x="1128" y="333" width="23.5" height="18" fill="none" stroke="#2a6bbf" stroke-width="2"/><path d="M1128 333 V328 H1134 L1136 333 H1151.5 V337 H1128 Z" fill="#2a6bbf"/><rect x="1130" y="329.5" width="4" height="4" fill="#fff"/>
<polygon points="1090.0,374 1105.0,374 1097.5,382.5" fill="#555"/>
<rect x="1125.5" y="364" width="28.5" height="28" fill="#3470c8"/><rect x="1125.5" y="364" width="28.5" height="10" fill="#5a90e0" opacity="0.6"/><path d="M1142 367 L1134 380 H1140 L1137 390 L1146 376 H1140 Z" fill="#f7c21a"/>
<polygon points="1133.5,407 1133.5,421 1142.0,414" fill="#555"/>
<rect x="1169" y="406" width="22" height="17" fill="none" stroke="#444" stroke-width="2"/><path d="M1169 406 V402 H1175 L1177 406 H1191 V410 H1169 Z" fill="#444"/><rect x="1171" y="403" width="3.5" height="4" fill="#fff"/>
<polygon points="1133.5,442.7 1133.5,456.7 1142.0,449.7" fill="#555"/>
<rect x="1169" y="441.7" width="22" height="17" fill="none" stroke="#444" stroke-width="2"/><path d="M1169 441.7 V437.7 H1175 L1177 441.7 H1191 V445.7 H1169 Z" fill="#444"/><rect x="1171" y="438.7" width="3.5" height="4" fill="#fff"/>
<polygon points="1133.5,478.6 1133.5,492.6 1142.0,485.6" fill="#555"/>
<rect x="1169" y="477.6" width="22" height="17" fill="none" stroke="#444" stroke-width="2"/><path d="M1169 477.6 V473.6 H1175 L1177 477.6 H1191 V481.6 H1169 Z" fill="#444"/><rect x="1171" y="474.6" width="3.5" height="4" fill="#fff"/>
<polygon points="1133.5,514.5 1133.5,528.5 1142.0,521.5" fill="#555"/>
<rect x="1169" y="513.5" width="22" height="17" fill="none" stroke="#444" stroke-width="2"/><path d="M1169 513.5 V509.5 H1175 L1177 513.5 H1191 V517.5 H1169 Z" fill="#444"/><rect x="1171" y="510.5" width="3.5" height="4" fill="#fff"/>
<polygon points="1133.5,550.7 1133.5,564.7 1142.0,557.7" fill="#555"/>
<rect x="1169" y="549.7" width="22" height="17" fill="none" stroke="#444" stroke-width="2"/><path d="M1169 549.7 V545.7 H1175 L1177 549.7 H1191 V553.7 H1169 Z" fill="#444"/><rect x="1171" y="546.7" width="3.5" height="4" fill="#fff"/>
<circle cx="1140" cy="586.6" r="5" fill="none" stroke="#555" stroke-width="1.8"/><path d="M1131 603.6 V599.6 Q1131 594.6 1140 594.6 Q1149 594.6 1149 599.6 V603.6 Z" fill="none" stroke="#555" stroke-width="1.8"/>
</svg>
<div class="t" style="left:1168.6px;top:328.9px;font-size:26.8px;color:#111;font-weight:400;">Example project</div>
<div class="t" style="left:1168.6px;top:364.9px;font-size:26.8px;color:#111;font-weight:400;">QET Collection</div>
<div class="t" style="left:1208.3px;top:400.9px;font-size:26.8px;color:#111;font-weight:400;">Electric</div>
<div class="t" style="left:1208.3px;top:436.6px;font-size:26.8px;color:#111;font-weight:400;">logics</div>
<div class="t" style="left:1208.3px;top:472.5px;font-size:26.8px;color:#111;font-weight:400;">Hydraulic</div>
<div class="t" style="left:1208.3px;top:508.4px;font-size:26.8px;color:#111;font-weight:400;">Pneumatic</div>
<div class="t" style="left:1208.3px;top:544.6px;font-size:26.8px;color:#111;font-weight:400;">Energy</div>
<div class="t" style="left:1168.6px;top:580.5px;font-size:26.8px;color:#111;font-weight:400;">User Collection</div>
<div class="a" style="left:1059.0px;top:2060.5px;width:308.0px;height:49.0px;background:linear-gradient(#dedede,#d7d7d7);border:1.5px solid #bcbcbc;border-radius:0 0 6px 6px"></div>
<div class="t" style="left:1085.3px;top:2074.0px;font-size:26.7px;color:#1a1a1a;font-weight:400;">Auto numbering sel...</div>
<div class="a" style="left:1367.0px;top:2060.0px;width:131.0px;height:53.5px;background:#f3f3f3;border:1.5px solid #b8b8b8;border-top:none;border-radius:0 0 6px 6px"></div>
<div class="t" style="left:1391.8px;top:2074.0px;font-size:26.7px;color:#1a1a1a;font-weight:400;">Colle...</div>
<div class="a" style="left:1498.0px;top:2060.5px;width:106.0px;height:49.0px;background:linear-gradient(#dedede,#d7d7d7);border:1.5px solid #bcbcbc;border-radius:0 0 6px 6px"></div>
<div class="t" style="left:1524.0px;top:2074.0px;font-size:26.7px;color:#1a1a1a;font-weight:400;">Un...</div>
<div class="a" style="left:1604.0px;top:2060.5px;width:97.0px;height:49.0px;background:linear-gradient(#dedede,#d7d7d7);border:1.5px solid #bcbcbc;border-radius:0 0 6px 6px"></div>
<div class="t" style="left:1630.7px;top:2074.0px;font-size:26.7px;color:#1a1a1a;font-weight:400;">Pr...</div>
<div class="a" style="left:1714.5px;top:207.0px;width:2124.0px;height:83.0px;background:linear-gradient(#f5f5f5,#ebebeb 70%,#ebebeb);border:1.5px solid #bdbdbd;border-bottom:none;border-radius:8px 8px 0 0"></div>
<div class="a" style="left:1712.0px;top:267.0px;width:2128.0px;height:25.0px;background:#ebebeb"></div>
<svg class="a" style="left:1740px;top:222px" width="30" height="30" viewBox="1740 222 30 30"><rect x="1743" y="230" width="22" height="17" fill="none" stroke="#2a6bbf" stroke-width="2"/><path d="M1743 230 V224.5 H1749 L1751 230 H1765 V234 H1743 Z" fill="#2a6bbf"/><rect x="1745" y="226.5" width="4" height="4" fill="#fff"/></svg>
<div class="t" style="left:2249.7px;top:225.6px;font-size:27.45px;color:#1e1e1e;font-weight:400;">Project « Example project : /Users/laurent/Desktop/examples/industrial.qet» [modified]</div>
<svg class="a" style="left:3776px;top:222px" width="34" height="32" viewBox="3776 222 34 32"><path d="M3782 229 Q3790 234 3797 244 Q3801 249 3805 250 Q3800 250 3796 246 Q3790 238 3782 229Z" fill="#1a1a1a" stroke="#1a1a1a" stroke-width="2"/><path d="M3803 227 Q3795 233 3790 240 Q3785 246 3781 250 L3786 250 Q3792 243 3797 236 Q3801 231 3805 228Z" fill="#1a1a1a"/></svg>
<svg class="a" style="left:1714px;top:284px" width="2126" height="60" viewBox="1714 284 2126 60">
<path d="M1728.5 303 V326 M1746 303 L1734 314.5 L1746 326" stroke="#555" stroke-width="1.6" fill="none"/>
<path d="M1762 337 V297 Q1762 291 1768 291 H1963 Q1969 291 1969 297 V337" fill="url(#tabg)" stroke="#bcbcbc" stroke-width="1.5"/>
<path d="M1969 337 V297 Q1969 291 1975 291 H2213 Q2219 291 2219 297 V337" fill="url(#tabg)" stroke="#bcbcbc" stroke-width="1.5"/>
<path d="M2219 337 V297 Q2219 291 2225 291 H2466 Q2472 291 2472 297 V337" fill="url(#tabg)" stroke="#bcbcbc" stroke-width="1.5"/>
<path d="M2472 337 V297 Q2472 291 2478 291 H2843 Q2849 291 2849 297 V337" fill="url(#tabg)" stroke="#bcbcbc" stroke-width="1.5"/>
<path d="M2849 337 V297 Q2849 291 2855 291 H3249 Q3255 291 3255 297 V337" fill="url(#tabg)" stroke="#bcbcbc" stroke-width="1.5"/>
<path d="M1756 290 L1764 290 L1770 303 L1762 326 L1768 340 L1750 340 Z" fill="#ebebeb"/>
<path d="M1763 291 L1770 303 L1762 326 L1768 337" stroke="#bcbcbc" stroke-width="1.5" fill="none"/>
<rect x="1997" y="307" width="27" height="20" fill="none" stroke="#444" stroke-width="2"/><path d="M1997 321 H2024 M2004 321 V327 M2017 321 V327" stroke="#444" stroke-width="1.8"/>
<rect x="2247" y="307" width="27" height="20" fill="none" stroke="#444" stroke-width="2"/><path d="M2247 321 H2274 M2254 321 V327 M2267 321 V327" stroke="#444" stroke-width="1.8"/>
<rect x="2501" y="307" width="27" height="20" fill="none" stroke="#444" stroke-width="2"/><path d="M2501 321 H2528 M2508 321 V327 M2521 321 V327" stroke="#444" stroke-width="1.8"/>
<rect x="2877.5" y="307" width="27" height="20" fill="none" stroke="#444" stroke-width="2"/><path d="M2877.5 321 H2904.5 M2884.5 321 V327 M2897.5 321 V327" stroke="#444" stroke-width="1.8"/>
<path d="M3255 341 V293 Q3255 287 3261 287 H3664.5 Q3670.5 287 3670.5 293 V341" fill="#fbfbfb" stroke="#bcbcbc" stroke-width="1.5"/>
<rect x="3283" y="303.5" width="27" height="20" fill="none" stroke="#444" stroke-width="2"/><path d="M3283 317.5 H3310 M3290 317.5 V323.5 M3303 317.5 V323.5" stroke="#444" stroke-width="1.8"/>
<rect x="3671.5" y="287.5" width="29" height="53" rx="5" fill="url(#btng)" stroke="#bcbcbc" stroke-width="1.5"/>
<rect x="3702" y="287.5" width="29" height="53" rx="5" fill="url(#btng)" stroke="#bcbcbc" stroke-width="1.5"/>
<polygon points="3690,306 3690,322 3682,314" fill="#555"/><polygon points="3713,306 3713,322 3721,314" fill="#555"/>
<rect x="3741" y="303.5" width="30" height="22" fill="none" stroke="#444" stroke-width="2"/><path d="M3741 320 H3760 M3749 320 V326" stroke="#444" stroke-width="1.8"/><path d="M3761 322 H3773 M3767 316 V328" stroke="#22b14c" stroke-width="2.4"/>
<path d="M3809 303 L3821 314.5 L3809 326 M3824 303 V326" stroke="#555" stroke-width="1.6" fill="none"/>
<defs><linearGradient id="tabg" x1="0" y1="0" x2="0" y2="1"><stop offset="0" stop-color="#e8e8e8"/><stop offset="1" stop-color="#dfdfdf"/></linearGradient><linearGradient id="btng" x1="0" y1="0" x2="0" y2="1"><stop offset="0" stop-color="#fafafa"/><stop offset="1" stop-color="#ececec"/></linearGradient></defs>
</svg>
<div class="a" style="left:1764px;top:291px;width:204px;height:46px;overflow:hidden"><div class="t" style="left:-25.0px;top:13.9px;font-size:25.6px;color:#1e1e1e;font-weight:400;">References Page</div></div>
<div class="t" style="left:2033.2px;top:304.3px;font-size:26.9px;color:#1e1e1e;font-weight:400;">2 - Folio list 1</div>
<div class="t" style="left:2283.2px;top:304.3px;font-size:26.9px;color:#1e1e1e;font-weight:400;">3 - Folio list 2</div>
<div class="t" style="left:2537.0px;top:304.2px;font-size:27.08px;color:#1e1e1e;font-weight:400;">4 - Mains Power Supply</div>
<div class="t" style="left:2913.6px;top:304.2px;font-size:27.12px;color:#1e1e1e;font-weight:400;">5 - Auxiliary Power Supply</div>
<div class="t" style="left:3318.7px;top:300.6px;font-size:27.33px;color:#1e1e1e;font-weight:400;">6 - Emergency Stop Circuit</div>
<div class="a" style="left:1714.0px;top:339.0px;width:2124.5px;height:1774.0px;background:#fff;border:1.5px solid #ababab"></div>
<div class="a" style="left:3256.5px;top:337.0px;width:412.5px;height:5.0px;background:#fdfdfd"></div>
<div class="a" style="left:1716.0px;top:2084.0px;width:2121.0px;height:28.0px;background:linear-gradient(#f2f2f2,#fbfbfb 30%,#f5f5f5);border-top:1.5px solid #c8c8c8"></div>
<div class="a" style="left:1744.0px;top:2085.0px;width:2.0px;height:27.0px;background:#cfcfcf"></div>
<div class="a" style="left:1746.0px;top:2085.5px;width:216.0px;height:26.5px;background:#dedede;border-right:1.5px solid #cccccc"></div>
<div class="a" style="left:3807.0px;top:2085.0px;width:2.0px;height:27.0px;background:#cfcfcf"></div>
<svg class="a" style="left:1716px;top:2084px" width="2122" height="28" viewBox="1716 2084 2122 28"><polygon points="1736,2090 1736,2106 1727,2098" fill="#555"/><polygon points="3818,2090 3818,2106 3827,2098" fill="#555"/></svg>
<svg class="a" style="left:3800px;top:2120px" width="40" height="40" viewBox="3800 2120 40 40"><rect x="3820" y="2147" width="2" height="2" fill="#c8c8c8"/><rect x="3826" y="2141" width="2" height="2" fill="#c8c8c8"/><rect x="3826" y="2147" width="2" height="2" fill="#c8c8c8"/><rect x="3832" y="2135" width="2" height="2" fill="#c8c8c8"/><rect x="3832" y="2141" width="2" height="2" fill="#c8c8c8"/><rect x="3832" y="2147" width="2" height="2" fill="#c8c8c8"/></svg>
<svg class="a" style="left:1716.5px;top:340.5px" width="2120.5" height="1743.5" viewBox="1716.5 340.5 2120.5 1743.5" font-family="Liberation Sans, sans-serif">
<defs><pattern id="dots" x="1734.45" y="415.45" width="21.22" height="21.22" patternUnits="userSpaceOnUse"><rect x="0" y="0" width="1.5" height="1.5" fill="#222"/></pattern><filter id="tipsh" x="-50%" y="-120%" width="200%" height="340%"><feGaussianBlur stdDeviation="16"/></filter></defs>
<rect x="1716.5" y="340.5" width="2120.5" height="1743.5" fill="#fff"/>
<path d="M1734.45 416.25H3826 M1734.45 437.25H3826 M1734.45 458.25H3826 M1734.45 479.25H3826 M1734.45 501.25H3826 M1734.45 522.25H3826 M1734.45 543.25H3826 M1734.45 564.25H3826 M1734.45 585.25H3826 M1734.45 607.25H3826 M1734.45 628.25H3826 M1734.45 649.25H3826 M1734.45 670.25H3826 M1734.45 692.25H3826 M1734.45 713.25H3826 M1734.45 734.25H3826 M1734.45 755.25H3826 M1734.45 776.25H3826 M1734.45 798.25H3826 M1734.45 819.25H3826 M1734.45 840.25H3826 M1734.45 861.25H3826 M1734.45 883.25H3826 M1734.45 904.25H3826 M1734.45 925.25H3826 M1734.45 946.25H3826 M1734.45 967.25H3826 M1734.45 989.25H3826 M1734.45 1010.25H3826 M1734.45 1031.25H3826 M1734.45 1052.25H3826 M1734.45 1074.25H3826 M1734.45 1095.25H3826 M1734.45 1116.25H3826 M1734.45 1137.25H3826 M1734.45 1158.25H3826 M1734.45 1180.25H3826 M1734.45 1201.25H3826 M1734.45 1222.25H3826 M1734.45 1243.25H3826 M1734.45 1265.25H3826 M1734.45 1286.25H3826 M1734.45 1307.25H3826 M1734.45 1328.25H3826 M1734.45 1349.25H3826 M1734.45 1371.25H3826 M1734.45 1392.25H3826 M1734.45 1413.25H3826 M1734.45 1434.25H3826 M1734.45 1455.25H3826 M1734.45 1477.25H3826 M1734.45 1498.25H3826 M1734.45 1519.25H3826 M1734.45 1540.25H3826 M1734.45 1562.25H3826 M1734.45 1583.25H3826 M1734.45 1604.25H3826 M1734.45 1625.25H3826 M1734.45 1646.25H3826 M1734.45 1668.25H3826 M1734.45 1689.25H3826 M1734.45 1710.25H3826 M1734.45 1731.25H3826 M1734.45 1753.25H3826 M1734.45 1774.25H3826 M1734.45 1795.25H3826 M1734.45 1816.25H3826 M1734.45 1837.25H3826 M1734.45 1859.25H3826 M1734.45 1880.25H3826 M1734.45 1901.25H3826 M1734.45 1922.25H3826" stroke="#000" stroke-width="1.5" stroke-dasharray="1.5 19.72" fill="none"/>
<rect x="1718" y="2021" width="2107" height="62" fill="#fff"/>
<g stroke="#000" fill="none">
<path d="M1718 362.6 H3826.2 M1718 404.4 H3826.2" stroke-width="2.2"/>
<path d="M3826.2 361.5 V2020" stroke-width="2.6"/>
<path d="M1787.9 362.6 V404.4 M1915.2 362.6 V404.4 M2042.5 362.6 V404.4 M2169.9 362.6 V404.4 M2297.2 362.6 V404.4 M2424.5 362.6 V404.4 M2551.8 362.6 V404.4 M2679.1 362.6 V404.4 M2806.5 362.6 V404.4 M2933.8 362.6 V404.4 M3061.1 362.6 V404.4 M3188.4 362.6 V404.4 M3315.7 362.6 V404.4 M3443.1 362.6 V404.4 M3570.4 362.6 V404.4 M3697.7 362.6 V404.4 " stroke-width="2.2"/>
</g>
<text x="1724.2" y="389.8" font-size="17.7" fill="#000" text-anchor="middle" style="white-space:pre" >2</text>
<text x="1851.6" y="389.8" font-size="17.7" fill="#000" text-anchor="middle" style="white-space:pre" >3</text>
<text x="1978.9" y="389.8" font-size="17.7" fill="#000" text-anchor="middle" style="white-space:pre" >4</text>
<text x="2106.2" y="389.8" font-size="17.7" fill="#000" text-anchor="middle" style="white-space:pre" >5</text>
<text x="2233.5" y="389.8" font-size="17.7" fill="#000" text-anchor="middle" style="white-space:pre" >6</text>
<text x="2360.8" y="389.8" font-size="17.7" fill="#000" text-anchor="middle" style="white-space:pre" >7</text>
<text x="2488.2" y="389.8" font-size="17.7" fill="#000" text-anchor="middle" style="white-space:pre" >8</text>
<text x="2615.5" y="389.8" font-size="17.7" fill="#000" text-anchor="middle" style="white-space:pre" >9</text>
<text x="2742.8" y="389.8" font-size="17.7" fill="#000" text-anchor="middle" style="white-space:pre" >10</text>
<text x="2870.1" y="389.8" font-size="17.7" fill="#000" text-anchor="middle" style="white-space:pre" >11</text>
<text x="2997.4" y="389.8" font-size="17.7" fill="#000" text-anchor="middle" style="white-space:pre" >12</text>
<text x="3124.8" y="389.8" font-size="17.7" fill="#000" text-anchor="middle" style="white-space:pre" >13</text>
<text x="3252.1" y="389.8" font-size="17.7" fill="#000" text-anchor="middle" style="white-space:pre" >14</text>
<text x="3379.4" y="389.8" font-size="17.7" fill="#000" text-anchor="middle" style="white-space:pre" >15</text>
<text x="3506.7" y="389.8" font-size="17.7" fill="#000" text-anchor="middle" style="white-space:pre" >16</text>
<text x="3634.0" y="389.8" font-size="17.7" fill="#000" text-anchor="middle" style="white-space:pre" >17</text>
<text x="3761.4" y="389.8" font-size="17.7" fill="#000" text-anchor="middle" style="white-space:pre" >18</text>
<path d="M1718.0 479.9 L2791.7 479.9 M1735.2 479.9 L1735.2 883.0 L1947.4 883.0 L1947.4 925.5 M1718.0 1540.9 L2798.0 1540.9 M1735.2 1540.9 L1735.2 1222.6 L1947.4 1222.6 L1947.4 1180.1 M1989.8 670.8 L1989.8 543.5 L2202.0 543.5 L2202.0 564.7 M2202.0 649.6 L2202.0 734.5 M2202.0 819.4 L2202.0 925.5 M1989.8 755.7 L1989.8 840.6 L2117.2 840.6 L2117.2 925.5 M2456.7 925.5 L2456.7 861.8 L2626.4 861.8 L2626.4 925.5 M2541.6 479.9 L2541.6 925.5 M2032.3 1180.1 L2032.3 1243.8 M2032.3 1286.2 L2032.3 1307.4 M2117.2 1180.1 L2117.2 1243.8 M2117.2 1286.2 L2117.2 1456.0 L2032.3 1456.0 L2032.3 1392.3 M2202.0 1180.1 L2202.0 1243.8 M2202.0 1286.2 L2202.0 1307.4 M2286.9 1180.1 L2286.9 1243.8 M2286.9 1286.2 L2286.9 1456.0 L2208.3 1456.0 L2208.3 1392.3 M2456.7 1180.1 L2456.7 1434.8 M2456.7 1519.6 L2456.7 1540.9 M2541.6 1180.1 L2541.6 1307.4 L2796.2 1307.4 L2796.2 1434.8 M2796.2 1519.6 L2796.2 1540.9 M2626.4 1180.1 L2626.4 1434.8 M2626.4 1519.6 L2626.4 1540.9 M3311.0 479.9 L3390.4 479.9 L3390.4 713.3 M3390.4 798.2 L3390.4 925.5 M3390.4 1010.4 L3390.4 1434.8 M3390.4 1328.7 L3538.9 1328.7 L3538.9 1434.8 M3331.0 1540.9 L3538.9 1540.9 L3538.9 1519.6 M3390.4 1519.6 L3390.4 1540.9 M1718.0 1731.8 L3704.0 1731.8" stroke="#000" stroke-width="2.1" fill="none" stroke-linecap="square"/>
<path d="M2541.6 479.9 V925.5 M2456.7 861.8 H2626.4 V925.5 M2541.6 1180.1 V1307.4 M2626.4 1180.1 V1540.9" stroke="#000" stroke-width="2.9" fill="none" stroke-linecap="square"/>
<circle cx="1735.2" cy="479.9" r="4.6" fill="#000"/>
<circle cx="2541.6" cy="479.9" r="4.6" fill="#000"/>
<circle cx="2541.6" cy="861.8" r="4.6" fill="#000"/>
<circle cx="1735.2" cy="1540.9" r="4.6" fill="#000"/>
<circle cx="2456.7" cy="1540.9" r="4.6" fill="#000"/>
<circle cx="2626.4" cy="1540.9" r="4.6" fill="#000"/>
<circle cx="3390.4" cy="1328.7" r="4.6" fill="#000"/>
<circle cx="3390.4" cy="1540.9" r="4.6" fill="#000"/>
<path d="M1961.7 702 A10.5 11 0 0 0 1961.7 724 Z" fill="none" stroke="#222" stroke-width="1.2"/>
<path d="M1962 712.7 H1982" stroke="#333" stroke-width="1.2" stroke-dasharray="3 2.2"/><path d="M1968 708 H1973 L1969 716" stroke="#333" stroke-width="1" fill="none"/>
<path d="M1985.5 1339 A9.5 10.5 0 0 0 1985.5 1360 Z" fill="none" stroke="#222" stroke-width="1.2"/>
<path d="M1986 1350 H2233.6" stroke="#555" stroke-width="1.3" stroke-dasharray="5 3"/>
<path d="M1991 1359 H1998 V1340 H2004" stroke="#222" stroke-width="1.2" fill="none"/><rect x="2004.8" y="1343.5" width="6" height="12.5" fill="#fff" stroke="#222" stroke-width="1.2"/><path d="M2019 1345 L2023 1352 L2028 1345" stroke="#333" stroke-width="1" fill="none"/>
<circle cx="2626.4" cy="1476.8" r="21.5" fill="none" stroke="#000" stroke-width="2"/><path d="M2611.2 1461.6 L2641.6 1492 M2641.6 1461.6 L2611.2 1492" stroke="#000" stroke-width="2"/>
<rect x="2416" y="1436" width="81" height="81.4" rx="18" fill="none" stroke="#999" stroke-width="1" stroke-dasharray="3 2"/>
<path d="M2350.6 1020.6 H2620.5" stroke="#444" stroke-width="1.2" stroke-dasharray="4.5 2.5"/>
<path d="M2350.6 1084.1 H2620.5" stroke="#444" stroke-width="1.2" stroke-dasharray="4.5 2.5"/>
<path d="M2798.0 470.7 L2821.0 479.9 L2798.0 489.1 Z M3282.3 470.7 L3304.3 479.9 L3282.3 489.1 Z M2798.0 1531.7 L2821.0 1540.9 L2798.0 1550.1 Z M3302.8 1531.7 L3324.8 1540.9 L3302.8 1550.1 Z M3711.6 1722.6 L3734.6 1731.8 L3711.6 1741.0 Z M1989.8 670.8 V692.1 M1978.4 691 L1989.8 734.5 V755.7 M2202.0 564.7 V588.0 H2215.3 M2212.5 585.0 L2202.0 627.4 V649.6 M2202.0 734.5 V757.8 H2215.3 M2212.5 754.8 L2202.0 797.2 V819.4 M3390.4 713.3 V734.5 M3380 734.5 L3390.4 776.9 V798.2 M3390.4 925.5 V946.7 M3380 946.7 L3390.4 989.1 V1010.4 M2032.3 1243.8 V1259.2 M2032.3 1270.8 V1286.2 M2117.2 1243.8 V1259.2 M2117.2 1270.8 V1286.2 M2202.0 1243.8 V1259.2 M2202.0 1270.8 V1286.2 M2286.9 1243.8 V1259.2 M2286.9 1270.8 V1286.2 M2032.3 1307.4 V1330 H2046 M2044.2 1327.5 L2032.3 1370.6 V1392.3 M2202.0 1307.4 V1330 H2222 M2219 1327.5 L2208.3 1370.6 V1392.3 M2456.7 1434.8 V1459.5 M2426.6 1459.5 H2486.8 V1494 H2426.6 Z M2456.7 1494 V1519.6 M2796.2 1434.8 V1459.5 M2766.1 1459.5 H2826.3 V1494 H2766.1 Z M2796.2 1494 V1519.6 M3390.4 1434.8 V1459.5 M3360.3 1459.5 H3420.5 V1494 H3360.3 Z M3390.4 1494 V1519.6 M3538.9 1434.8 V1459.5 M3508.8 1459.5 H3569.0 V1494 H3508.8 Z M3538.9 1494 V1519.6 M2626.4 1434.8 V1455.3 M2626.4 1498.3 V1519.6 M1926.2 925.5 H2647.7 V1180.1 H1926.2 Z M1926.2 967.9 H2647.7 M1926.2 1137.7 H2647.7 M1968.6 925.5 V967.9 M1968.6 1137.7 V1180.1 M2011.1 925.5 V967.9 M2011.1 1137.7 V1180.1 M2053.5 925.5 V967.9 M2053.5 1137.7 V1180.1 M2095.9 925.5 V967.9 M2095.9 1137.7 V1180.1 M2138.4 925.5 V967.9 M2138.4 1137.7 V1180.1 M2180.8 925.5 V967.9 M2180.8 1137.7 V1180.1 M2223.3 925.5 V967.9 M2223.3 1137.7 V1180.1 M2265.7 925.5 V967.9 M2265.7 1137.7 V1180.1 M2308.1 925.5 V967.9 M2308.1 1137.7 V1180.1 M2435.5 925.5 V967.9 M2435.5 1137.7 V1180.1 M2477.9 925.5 V967.9 M2477.9 1137.7 V1180.1 M2520.3 925.5 V967.9 M2520.3 1137.7 V1180.1 M2562.8 925.5 V967.9 M2562.8 1137.7 V1180.1 M2605.2 925.5 V967.9 M2605.2 1137.7 V1180.1 M1947.4 967.9 V999.6 H1968 M1989.3 999.6 H2020.5 M2074.3 999.6 H2087.3 V1073.6 H2032.3 V1137.7 M1968 989.4 V1010 L1989.3 999.6 Z M1989.3 989 V1010.5 M2020.5 989.4 H2074.3 V1009.5 H2020.5 Z M2020.5 1016 H2031.5 L2075.7 982 M2104 989.4 H2299.8 V1116.4 H2104 Z M2117.2 967.9 V989.4 M2202.0 967.9 V989.4 M2286.9 967.9 V989.4 M2117.2 1116.4 V1137.7 M2286.9 1116.4 V1137.7 M1947.4 1137.7 V1126.6 H2202.0 V1137.7 M2074.3 1126.6 V1105.3 H2104 M2299.8 999.6 H2328.8 V1010.0 M2307.8 1010.0 H2350.6 V1031.3 H2307.8 Z M2328.8 1031.3 V1044.0 H2299.8 M2299.8 1063.1 H2328.8 V1073.5 M2307.8 1073.5 H2350.6 V1094.8 H2307.8 Z M2328.8 1094.8 V1107.5 H2299.8 M2456.7 967.9 V1000.4 M2445.8 999 L2456.7 1041.3 V1063 M2445.8 1062 L2456.7 1105.3 V1137.7 M2541.6 967.9 V1000.4 M2530.7 999 L2541.6 1041.3 V1063 M2530.7 1062 L2543.6 1105.3 V1137.7 M2626.4 967.9 V1000.4 M2615.5 999 L2626.4 1041.3 V1063 M2615.5 1062 L2626.4 1105.3 V1137.7" stroke="#000" stroke-width="2.1" fill="none" stroke-linejoin="miter"/>
<circle cx="2032.3" cy="1265" r="5.8" fill="#fff" stroke="#000" stroke-width="2"/><rect x="2031.6" y="1264.3" width="1.4" height="1.4" fill="#000"/>
<circle cx="2117.2" cy="1265" r="5.8" fill="#fff" stroke="#000" stroke-width="2"/><rect x="2116.5" y="1264.3" width="1.4" height="1.4" fill="#000"/>
<circle cx="2202.0" cy="1265" r="5.8" fill="#fff" stroke="#000" stroke-width="2"/><rect x="2201.3" y="1264.3" width="1.4" height="1.4" fill="#000"/>
<circle cx="2286.9" cy="1265" r="5.8" fill="#fff" stroke="#000" stroke-width="2"/><rect x="2286.2" y="1264.3" width="1.4" height="1.4" fill="#000"/>
<path d="M2791.7 479.9 H2798.0 M3304.0 479.9 H3311.0 M3324.0 1540.9 H3331.0 M3704.0 1731.8 H3711.6 M1989.8 671.8 V679.8 M1989.8 746.2 V754.2 M2202.0 565.6 V574.3 M2202.0 639.8 V647.8 M2202.0 735.4 V744.1 M2202.0 809.6 V817.6 M3390.4 713.8 V722.6 M3390.4 788.2 V797.0 M3390.4 926.0 V934.8 M3390.4 1000.4 V1009.2 M2032.3 1245.3 V1252.9 M2032.3 1273.4 V1284.8 M2117.2 1245.3 V1252.9 M2117.2 1273.4 V1284.8 M2202.0 1245.3 V1252.9 M2202.0 1273.4 V1284.8 M2286.9 1245.3 V1252.9 M2286.9 1273.4 V1284.8 M2032.3 1307.6 V1317.3 M2032.3 1382.0 V1391.0 M2202.0 1307.6 V1317.3 M2208.3 1383.5 V1391.0 M2456.7 1434.5 V1442.5 M2456.7 1512.0 V1520.5 M2796.2 1434.5 V1442.5 M2796.2 1512.0 V1520.5 M3390.4 1434.5 V1442.5 M3390.4 1512.0 V1520.5 M3538.9 1434.5 V1442.5 M3538.9 1512.0 V1520.5 M2626.4 1434.5 V1442.5 M2626.4 1512.0 V1520.5 M1947.4 926.5 V935.0 M2117.2 926.5 V935.0 M2202.0 926.5 V935.0 M2286.9 926.5 V935.0 M2456.7 926.5 V935.0 M2541.6 926.5 V935.0 M2626.4 926.5 V935.0 M1947.4 1170.6 V1179.1 M2032.3 1170.6 V1179.1 M2117.2 1170.6 V1179.1 M2202.0 1170.6 V1179.1 M2286.9 1170.6 V1179.1 M2456.7 1170.6 V1179.1 M2541.6 1170.6 V1179.1 M2626.4 1170.6 V1179.1" stroke="#ff0000" stroke-width="2.2" fill="none"/>
<text x="2117.0" y="466.1" font-size="11.4" fill="#000" text-anchor="middle" style="white-space:pre" >24V1</text>
<text x="2095.0" y="530.3" font-size="12" fill="#000" text-anchor="middle" style="white-space:pre" >602</text>
<text x="2053.0" y="827.6" font-size="12" fill="#000" text-anchor="middle" style="white-space:pre" >601</text>
<text x="2668.0" y="1294.0" font-size="12" fill="#000" text-anchor="middle" style="white-space:pre" >610</text>
<text x="2244.0" y="1527.9" font-size="11.4" fill="#000" text-anchor="middle" style="white-space:pre" >0VDC</text>
<text x="3443.6" y="1528.3" font-size="12" fill="#000" text-anchor="middle" style="white-space:pre" >230N</text>
<text x="2679.0" y="1718.5" font-size="9.8" fill="#000" text-anchor="middle" style="white-space:pre" >PE</text>
<text x="0" y="4.3" font-size="12" fill="#000" text-anchor="middle" transform="translate(3374.8 584.6) rotate(-90)">230L</text>
<text x="0" y="4.3" font-size="12" fill="#000" text-anchor="middle" transform="translate(3374.8 861.7) rotate(-90)">620</text>
<text x="0" y="4.3" font-size="12" fill="#000" text-anchor="middle" transform="translate(3374.0 1179.0) rotate(-90)">621</text>
<text x="0" y="4.3" font-size="12" fill="#000" text-anchor="middle" transform="translate(2184.5 691.7) rotate(-90)">603</text>
<text x="0" y="4.3" font-size="12" fill="#000" text-anchor="middle" transform="translate(2185.0 872.0) rotate(-90)">604</text>
<text x="0" y="4.3" font-size="12" fill="#000" text-anchor="middle" transform="translate(2015.0 1211.6) rotate(-90)">605</text>
<text x="0" y="4.3" font-size="12" fill="#000" text-anchor="middle" transform="translate(2185.0 1211.6) rotate(-90)">607</text>
<text x="0" y="4.3" font-size="12" fill="#000" text-anchor="middle" transform="translate(2100.6 1380.8) rotate(-90)">606</text>
<text x="0" y="4.3" font-size="12" fill="#000" text-anchor="middle" transform="translate(2269.8 1380.8) rotate(-90)">608</text>
<text x="0" y="4.3" font-size="12" fill="#000" text-anchor="middle" transform="translate(2439.7 1306.0) rotate(-90)">609</text>
<text x="0" y="4.3" font-size="12" fill="#000" text-anchor="middle" transform="translate(2610.0 1306.0) rotate(-90)">611</text>
<text x="1944.6" y="953.0" font-size="16.1" fill="#000" text-anchor="middle" style="white-space:pre" >A1</text>
<text x="2114.4" y="953.0" font-size="16.1" fill="#000" text-anchor="middle" style="white-space:pre" >S33</text>
<text x="2199.2" y="953.0" font-size="16.1" fill="#000" text-anchor="middle" style="white-space:pre" >S34</text>
<text x="2284.1" y="953.0" font-size="16.1" fill="#000" text-anchor="middle" style="white-space:pre" >S39</text>
<text x="2453.9" y="953.0" font-size="16.1" fill="#000" text-anchor="middle" style="white-space:pre" >13</text>
<text x="2538.8" y="953.0" font-size="16.1" fill="#000" text-anchor="middle" style="white-space:pre" >23</text>
<text x="2623.6" y="953.0" font-size="16.1" fill="#000" text-anchor="middle" style="white-space:pre" >33</text>
<text x="1944.6" y="1163.0" font-size="16.1" fill="#000" text-anchor="middle" style="white-space:pre" >A2</text>
<text x="2029.5" y="1163.0" font-size="16.1" fill="#000" text-anchor="middle" style="white-space:pre" >S11</text>
<text x="2114.4" y="1163.0" font-size="16.1" fill="#000" text-anchor="middle" style="white-space:pre" >S12</text>
<text x="2199.2" y="1163.0" font-size="16.1" fill="#000" text-anchor="middle" style="white-space:pre" >S21</text>
<text x="2284.1" y="1163.0" font-size="16.1" fill="#000" text-anchor="middle" style="white-space:pre" >S22</text>
<text x="2453.9" y="1163.0" font-size="16.1" fill="#000" text-anchor="middle" style="white-space:pre" >14</text>
<text x="2538.8" y="1163.0" font-size="16.1" fill="#000" text-anchor="middle" style="white-space:pre" >24</text>
<text x="2623.6" y="1163.0" font-size="16.1" fill="#000" text-anchor="middle" style="white-space:pre" >34</text>
<text x="1935.0" y="1065.2" font-size="19.1" fill="#000" text-anchor="start" style="white-space:pre" >XPS AF</text>
<text x="2115.0" y="1057.1" font-size="14.2" fill="#000" text-anchor="start" style="white-space:pre" >Logic</text>
<text x="2047.0" y="1027.0" font-size="14" fill="#000" text-anchor="middle" style="white-space:pre" >T</text>
<text x="2340.0" y="1004.4" font-size="9.5" fill="#000" text-anchor="middle" style="white-space:pre" >K1</text>
<text x="2339.0" y="1068.4" font-size="9.5" fill="#000" text-anchor="middle" style="white-space:pre" >K2</text>
<text x="2683.0" y="972.3" font-size="19.3" fill="#000" text-anchor="start" style="white-space:pre" >6XPSAF</text>
<text x="1764.5" y="719.6" font-size="20.4" fill="#000" text-anchor="start" style="white-space:pre" >E-Stop Reset</text>
<text x="2004.3" y="723.0" font-size="18" fill="#000" text-anchor="start" style="white-space:pre" >6S1</text>
<text x="2184.5" y="579.0" font-size="8.3" fill="#000" text-anchor="middle" style="white-space:pre" >11</text>
<text x="2184.5" y="642.8" font-size="8.3" fill="#000" text-anchor="middle" style="white-space:pre" >12</text>
<text x="2184.5" y="748.8" font-size="8.3" fill="#000" text-anchor="middle" style="white-space:pre" >11</text>
<text x="2184.5" y="812.6" font-size="8.3" fill="#000" text-anchor="middle" style="white-space:pre" >12</text>
<text x="2231.0" y="579.8" font-size="11.8" fill="#333" text-anchor="start" style="white-space:pre" >(6-G15)</text>
<text x="2223.0" y="617.1" font-size="19" fill="#000" text-anchor="start" style="white-space:pre" >6KEP1</text>
<text x="2232.8" y="749.7" font-size="11.8" fill="#333" text-anchor="start" style="white-space:pre" >(6-G16)</text>
<text x="2223.0" y="787.2" font-size="19" fill="#000" text-anchor="start" style="white-space:pre" >6KEP2</text>
<text x="3373.0" y="720.5" font-size="8.3" fill="#000" text-anchor="middle" style="white-space:pre" >11</text>
<text x="3373.0" y="791.0" font-size="8.3" fill="#000" text-anchor="middle" style="white-space:pre" >14</text>
<text x="3411.0" y="727.2" font-size="11.8" fill="#333" text-anchor="start" style="white-space:pre" >(6-G8)</text>
<text x="3406.0" y="764.8" font-size="19" fill="#000" text-anchor="start" style="white-space:pre" >6KE1</text>
<text x="3373.0" y="933.0" font-size="8.3" fill="#000" text-anchor="middle" style="white-space:pre" >11</text>
<text x="3373.0" y="1003.0" font-size="8.3" fill="#000" text-anchor="middle" style="white-space:pre" >14</text>
<text x="3409.0" y="940.2" font-size="11.8" fill="#333" text-anchor="start" style="white-space:pre" >(6-G10)</text>
<text x="3406.0" y="977.8" font-size="19" fill="#000" text-anchor="start" style="white-space:pre" >6KE2</text>
<text x="2053.6" y="1241.2" font-size="10.9" fill="#000" text-anchor="middle" style="white-space:pre" >XE:1</text>
<text x="2139.6" y="1241.2" font-size="10.9" fill="#000" text-anchor="middle" style="white-space:pre" >XE:2</text>
<text x="2224.5" y="1241.2" font-size="10.9" fill="#000" text-anchor="middle" style="white-space:pre" >XE:3</text>
<text x="2309.5" y="1241.2" font-size="10.9" fill="#000" text-anchor="middle" style="white-space:pre" >XE:4</text>
<text x="1871.5" y="1357.2" font-size="20.1" fill="#000" text-anchor="start" style="white-space:pre" >E-Stop</text>
<text x="2235.8" y="1357.9" font-size="19.2" fill="#000" text-anchor="start" style="white-space:pre" >6S2</text>
<text x="2465.4" y="1419.2" font-size="18.8" fill="#000" text-anchor="start" style="white-space:pre" >6KE1</text>
<text x="2635.0" y="1419.4" font-size="19.2" fill="#000" text-anchor="start" style="white-space:pre" >6H1</text>
<text x="2805.0" y="1419.3" font-size="19" fill="#000" text-anchor="start" style="white-space:pre" >6KE2</text>
<text x="3399.4" y="1419.3" font-size="19" fill="#000" text-anchor="start" style="white-space:pre" >6KEP1</text>
<text x="3548.0" y="1419.3" font-size="19" fill="#000" text-anchor="start" style="white-space:pre" >6KEP2</text>
<text x="2473.7" y="1443.9" font-size="8.2" fill="#000" text-anchor="middle" style="white-space:pre" >A1</text>
<text x="2809.6" y="1450.8" font-size="8.2" fill="#000" text-anchor="middle" style="white-space:pre" >A1</text>
<text x="2814.6" y="1519.8" font-size="8.2" fill="#000" text-anchor="middle" style="white-space:pre" >A2</text>
<text x="3408.0" y="1443.9" font-size="8.2" fill="#000" text-anchor="middle" style="white-space:pre" >A1</text>
<text x="3552.6" y="1450.9" font-size="8.2" fill="#000" text-anchor="middle" style="white-space:pre" >A1</text>
<text x="3557.0" y="1519.9" font-size="8.2" fill="#000" text-anchor="middle" style="white-space:pre" >A2</text>
<text x="2839.0" y="483.0" font-size="19.6" fill="#000" text-anchor="start" style="white-space:pre" >16-H1</text>
<text x="3199.5" y="483.2" font-size="20.2" fill="#000" text-anchor="start" style="white-space:pre" >5-G10</text>
<text x="2838.8" y="1545.5" font-size="21" fill="#000" text-anchor="start" style="white-space:pre" >9-H9</text>
<text x="3221.4" y="1545.2" font-size="20.2" fill="#000" text-anchor="start" style="white-space:pre" >5-G10</text>
<text x="3751.8" y="1736.6" font-size="19.8" fill="#000" text-anchor="start" style="white-space:pre" >9-H1</text>
<text x="1935.0" y="1780.3" font-size="20.4" fill="#000" text-anchor="start" style="white-space:pre" >PB Emergency Stop  Module</text>
<text x="2592.0" y="1780.3" font-size="20.4" fill="#000" text-anchor="start" style="white-space:pre" >E-Stop Reset HL</text>
<path d="M2435.6 1905.8 H2453.5 M2453.5 1912.7 L2470.0 1905.8 H2487.5 M2775.0 1905.8 H2792.9 M2792.9 1912.7 L2809.4 1905.8 H2826.9 M3372.1 1842.4 H3392.1 V1836.1 M3389.8 1835.6 L3406.9 1842.4 H3424.1 M3372.1 1863.4 H3390.2 M3389.8 1870.0 L3406.9 1863.4 H3424.1 M3381.1 1863.4 A4.5 4.5 0 0 0 3390.1 1863.4 M3372.1 1884.6 H3390.2 M3389.8 1891.2 L3406.9 1884.6 H3424.1 M3381.1 1884.6 A4.5 4.5 0 0 0 3390.1 1884.6 M3372.1 1906.0 H3390.2 M3389.8 1912.6 L3406.9 1906.0 H3424.1 M3381.1 1906.0 A4.5 4.5 0 0 0 3390.1 1906.0 M3520.5 1842.4 H3540.5 V1836.1 M3538.2 1835.6 L3555.3 1842.4 H3572.5 M3520.5 1863.4 H3538.6 M3538.2 1870.0 L3555.3 1863.4 H3572.5 M3529.5 1863.4 A4.5 4.5 0 0 0 3538.5 1863.4 M3520.5 1884.6 H3538.6 M3538.2 1891.2 L3555.3 1884.6 H3572.5 M3529.5 1884.6 A4.5 4.5 0 0 0 3538.5 1884.6 M3520.5 1906.0 H3538.6 M3538.2 1912.6 L3555.3 1906.0 H3572.5 M3529.5 1906.0 A4.5 4.5 0 0 0 3538.5 1906.0" stroke="#222" stroke-width="1.4" fill="none"/>
<text x="2499.6" y="1908.2" font-size="11.75" fill="#000" text-anchor="start" style="white-space:pre" >6-C15</text>
<text x="2839.4" y="1908.2" font-size="11.75" fill="#000" text-anchor="start" style="white-space:pre" >6-D15</text>
<text x="3436.7" y="1844.4" font-size="11.75" fill="#000" text-anchor="start" style="white-space:pre" >6-B6</text>
<text x="3436.7" y="1865.6" font-size="11.75" fill="#000" text-anchor="start" style="white-space:pre" >7-C3</text>
<text x="3436.7" y="1886.7" font-size="11.75" fill="#000" text-anchor="start" style="white-space:pre" >7-C3</text>
<text x="3436.7" y="1908.2" font-size="11.75" fill="#000" text-anchor="start" style="white-space:pre" >7-C3</text>
<text x="3584.7" y="1844.4" font-size="11.75" fill="#000" text-anchor="start" style="white-space:pre" >6-C6</text>
<text x="3584.7" y="1865.6" font-size="11.75" fill="#000" text-anchor="start" style="white-space:pre" >7-E3</text>
<text x="3584.7" y="1886.7" font-size="11.75" fill="#000" text-anchor="start" style="white-space:pre" >7-E3</text>
<text x="3584.7" y="1908.2" font-size="11.75" fill="#000" text-anchor="start" style="white-space:pre" >7-E3</text>
<path d="M1718 1933.8 H3826.2 M1718 2019.1 H3826.2 M1718 1954.7 H2074.3 M1718 1976 H2074.3 M1718 1997.3 H2074.3 M1793.6 1933.8 V2019.1 M1841 1933.8 V2019.1 M1910.5 1933.8 V2019.1 M2284.6 1933.8 V2019.1 M2074.3 1997 H2774.7 M2517.6 1997 V2019.1 M3172 1933.8 V2019.1 M3172 1975.8 H3826.2 M3568.4 1933.8 V1975.8 M3568.4 1955.3 H3826.2 M3335.7 1975.8 V2019.1 M3732.7 1975.8 V2019.1 M3732.7 1997.2 H3826.2" stroke="#000" stroke-width="2.3" fill="none"/>
<path d="M1723.8 1933.8 V2019.1 M2074.3 1933.8 V2019.1 M2774.7 1933.8 V2019.1" stroke="#000" stroke-width="3" fill="none"/>
<text x="1875.7" y="1948.2" font-size="10.7" fill="#000" text-anchor="middle" style="white-space:pre" >DATE</text>
<text x="1875.7" y="1969.6" font-size="10.7" fill="#000" text-anchor="middle" style="white-space:pre" >DSGN</text>
<text x="1875.7" y="1991.1" font-size="10.7" fill="#000" text-anchor="middle" style="white-space:pre" >CHKD</text>
<text x="1875.7" y="2011.8" font-size="10.7" fill="#000" text-anchor="middle" style="white-space:pre" >APPD</text>
<text x="1758.7" y="2011.8" font-size="10.7" fill="#000" text-anchor="middle" style="white-space:pre" >DATE</text>
<text x="1817.3" y="2011.8" font-size="10.7" fill="#000" text-anchor="middle" style="white-space:pre" >INIT</text>
<text x="1915.2" y="1949.5" font-size="14.2" fill="#000" text-anchor="start" style="white-space:pre" >01/09/2018</text>
<text x="1915.2" y="1970.6" font-size="13.5" fill="#000" text-anchor="start" style="white-space:pre" >IM</text>
<text x="1915.2" y="1992.1" font-size="13.5" fill="#000" text-anchor="start" style="white-space:pre" >AM</text>
<text x="1915.2" y="2012.8" font-size="13.5" fill="#000" text-anchor="start" style="white-space:pre" >AM</text>
<text x="1827.0" y="1992.2" font-size="13.6" fill="#000" text-anchor="end" style="white-space:pre" >22</text>
<text x="2078.7" y="2013.4" font-size="13.6" fill="#000" text-anchor="start" style="white-space:pre" >QET 0.8</text>
<text x="2289.0" y="2013.7" font-size="14.4" fill="#000" text-anchor="start" style="white-space:pre" >Intake Gate Control</text>
<text x="2522.0" y="2013.7" font-size="14.5" fill="#000" text-anchor="start" style="white-space:pre" >Electrical Cabinet</text>
<text x="2976.5" y="1985.9" font-size="24.85" fill="#000" text-anchor="middle" style="white-space:pre" >Emergency Stop Circuit</text>
<text x="3373.2" y="1962.7" font-size="20.8" fill="#000" text-anchor="middle" style="white-space:pre" >Example project</text>
<text x="3573.4" y="1949.5" font-size="14.2" fill="#000" text-anchor="start" style="white-space:pre" >Proj N°:</text>
<text x="3256.0" y="2005.4" font-size="20.6" fill="#000" text-anchor="middle" style="white-space:pre" >%{machine}</text>
<text x="3536.5" y="2005.1" font-size="19.9" fill="#000" text-anchor="middle" style="white-space:pre" >-IGC</text>
<text x="3737.0" y="1992.4" font-size="13.8" fill="#000" text-anchor="start" style="white-space:pre" >Page: 6</text>
<text x="3737.0" y="2013.6" font-size="14.2" fill="#000" text-anchor="start" style="white-space:pre" >Next: 7</text>
<rect x="2896" y="1510" width="172" height="48" fill="#000" opacity="0.2" filter="url(#tipsh)"/>
<rect x="2902.6" y="1506.4" width="158.7" height="38.6" fill="#fff" stroke="#111" stroke-width="2"/>
<text x="2910.0" y="1533.5" font-size="23.7" fill="#1a1a1a" text-anchor="start" style="white-space:pre" >X: 590 Y: 559</text>
</svg>
</body></html>
